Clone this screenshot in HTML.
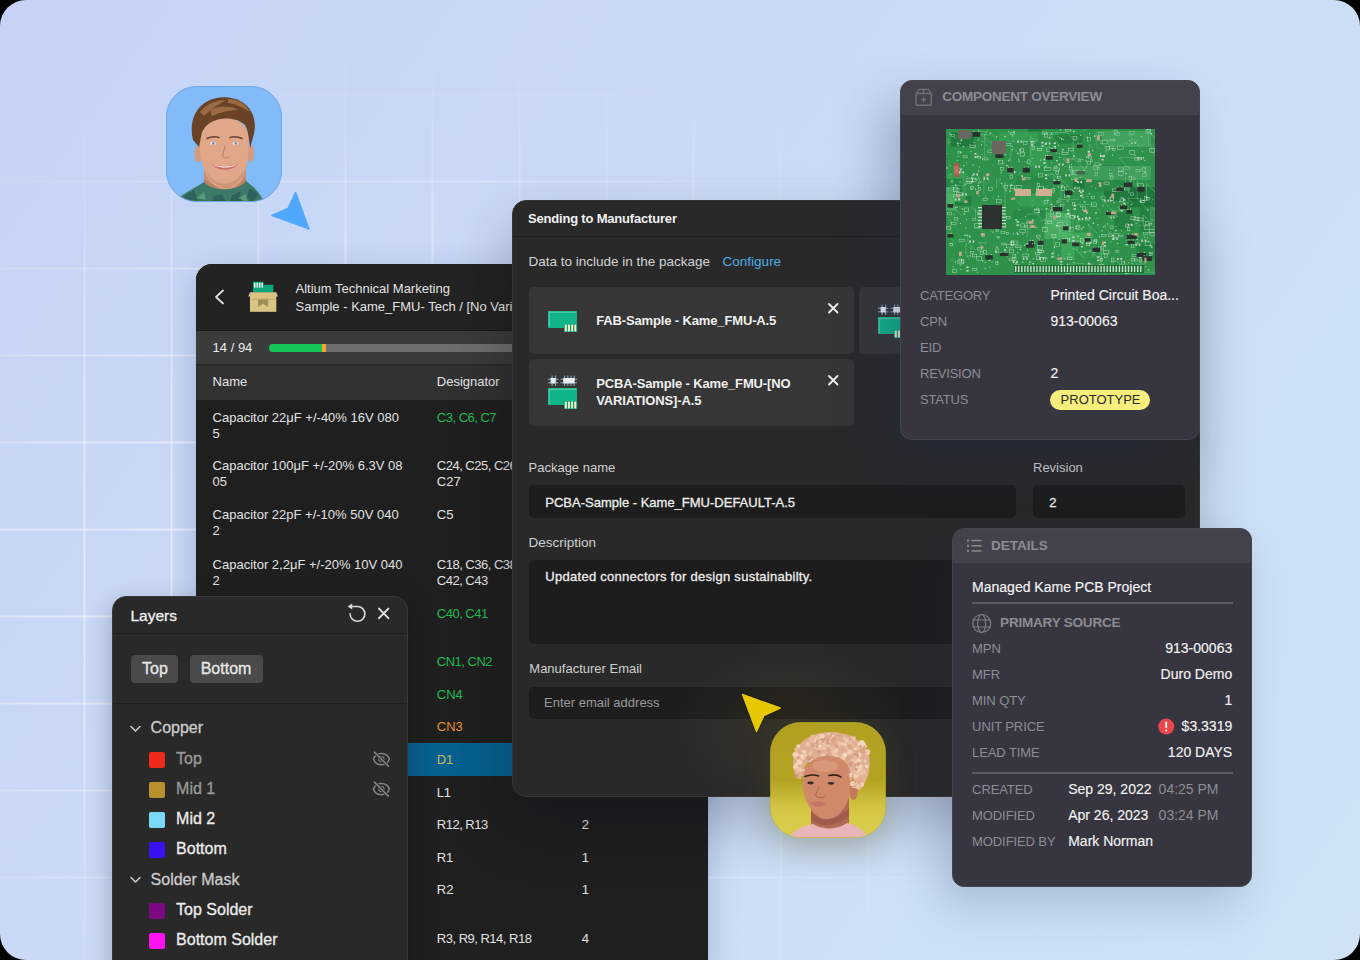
<!DOCTYPE html>
<html><head><meta charset="utf-8"><style>
html,body{margin:0;padding:0;width:1360px;height:960px;overflow:hidden;background:#000;}
body{position:relative;font-family:"Liberation Sans",sans-serif;}
.t{position:absolute;white-space:nowrap;line-height:1;}
.r{position:absolute;}
svg{position:absolute;overflow:visible;}
</style></head><body>
<div class="r" style="left:0;top:0;width:1360px;height:960px;border-radius:26px;overflow:hidden;background:linear-gradient(125deg,#c6d3f6 0%,#c7d4f6 5%,#cad9f6 34%,#cde0f6 74%,#cde1f5 85%,#cfe3f5 100%);"><div class="r" style="left:0;top:0;width:1360px;height:960px;background-image:linear-gradient(90deg,rgba(255,255,255,.5) 0 2px,transparent 2px),linear-gradient(180deg,rgba(255,255,255,.5) 0 2px,transparent 2px);background-size:87px 87px;background-position:83.5px 6.5px;-webkit-mask-image:radial-gradient(ellipse 700px 520px at 420px 560px,#000 40%,transparent 100%);"></div></div>
<svg style="left:0;top:0" width="1360" height="960" viewBox="0 0 1360 960">
<defs><clipPath id="av1"><rect x="166.5" y="86.5" width="115" height="115" rx="30"/></clipPath>
<clipPath id="av2"><rect x="770.5" y="722.5" width="115" height="115" rx="30"/></clipPath>
<linearGradient id="yg" x1="0" y1="0" x2="0" y2="1"><stop offset="0" stop-color="#b2a120"/><stop offset=".5" stop-color="#b4a322"/><stop offset=".76" stop-color="#d6c846"/><stop offset="1" stop-color="#dbcc4c"/></linearGradient>
</defs>
<g clip-path="url(#av1)">
<rect x="166" y="86" width="116" height="116" fill="#82bbfa"/>
<path d="M204 168 L246 168 L246 196 L204 196 Z" fill="#c98e72"/>
<path d="M204 178 C214 190 236 190 246 178 L246 186 C236 194 214 194 204 186 Z" fill="#b57a60" opacity=".7"/>
<path d="M170 204 L181 196 C190 190 198 186 204 182 C212 192 238 192 246 181 C252 186 258 190 262 198 L268 204 Z" fill="#3d7868"/>
<path d="M184 196 L194 190 L198 200 L188 202 Z M250 188 L258 194 L254 202 L246 198 Z M214 196 L222 194 L226 202 L212 202 Z M232 195 L240 192 L242 202 L230 202 Z" fill="#2c5c5a" opacity=".8"/>
<path d="M196 198 L204 192 L206 200 Z M238 198 L246 194 L248 202 Z" fill="#62a888" opacity=".7"/>
<ellipse cx="198" cy="154" rx="3.6" ry="8.5" fill="#d89a7c"/>
<ellipse cx="250.5" cy="153.5" rx="3.6" ry="8.5" fill="#d89a7c"/>
<path d="M199.5 138 C199 156 203 174 212 183 C217 188 222 189 226 189 C231 189 236 187 240 182 C247 173 249 156 248.5 138 C247 124 238 118 224 118 C210 118 201 124 199.5 138 Z" fill="#e0a888"/>
<path d="M203 164 C206 176 214 186 226 189 C236 187 244 178 247 164 C244 172 238 180 232 182 C228 184 222 184 218 182 C210 178 206 172 203 164 Z" fill="#b88a6c" opacity=".55"/>
<path d="M193 140 C189 124 194 108 208 101 C218 96 232 96 242 102 C252 108 257 120 254 134 L250 148 C249 138 248 130 245 125 C240 120 232 118 224 118.5 C214 119 206 124 202 132 L199 147 Z" fill="#6a4226"/>
<path d="M200 112 C206 104 216 100 226 100 C220 104 212 108 204 116 Z M228 99 C238 99 246 104 250 112 C244 108 236 104 228 103 Z M210 110 C218 106 230 105 238 110 C230 110 220 112 212 116 Z" fill="#9a6a44"/>
<path d="M207 138.5 C211 136.5 216 136.5 219 137.5 M230 137.5 C233 136.5 238 136.5 242 138.5" fill="none" stroke="#6a4630" stroke-width="1.6" stroke-linecap="round"/>
<ellipse cx="213" cy="143.5" rx="3" ry="1.4" fill="#f4e8e0"/><circle cx="213.3" cy="143.5" r="1.2" fill="#5a7ea8"/>
<ellipse cx="235.5" cy="143.5" rx="3" ry="1.4" fill="#f4e8e0"/><circle cx="235.8" cy="143.5" r="1.2" fill="#5a7ea8"/>
<path d="M225 146 L222.5 156 C224 158.5 227 158.5 229 157" fill="none" stroke="#b47a60" stroke-width="1"/>
<path d="M212.5 164 C219 166.5 231 166.5 237.5 164 C234 171.5 216 171.5 212.5 164 Z" fill="#d06a6a"/>
<path d="M213.5 164.5 C219 167 231 167 236.5 164.5 C233 168.5 217 168.5 213.5 164.5 Z" fill="#fff"/>
</g>
<rect x="166.5" y="86.5" width="115" height="115" rx="30" fill="none" stroke="#6eaaf2" stroke-width="1"/>
<path d="M295.6 192.5 L308.8 228.8 L272 215.5 L288 208.5 Z" fill="#50a8fd" stroke="#50a8fd" stroke-width="1.6" stroke-linejoin="round"/>
</svg>
<div class="r" style="left:196px;top:264px;width:512px;height:720px;border-radius:16px;background:#1f1f1f;overflow:hidden;box-shadow:0 10px 30px rgba(40,60,110,.25);"><div class="r" style="left:0;top:0;width:512px;height:66px;background:#232323"></div><div class="r" style="left:0;top:66px;width:512px;height:1.5px;background:#1a1a1a"></div><div class="r" style="left:0;top:67px;width:512px;height:33px;background:#3b3b3b"></div><div class="r" style="left:0;top:100px;width:512px;height:2px;background:#2a2a2a"></div><div class="r" style="left:0;top:102px;width:512px;height:34px;background:#313131"></div><div class="r" style="left:0;top:479px;width:512px;height:33px;background:#07608f"></div></div>
<svg style="left:0;top:0" width="1" height="1"><path d="M223 290.5 L216 297 L223 303.5" fill="none" stroke="#e0e0e0" stroke-width="1.8" stroke-linecap="round" stroke-linejoin="round"/></svg>
<svg style="left:0;top:0" width="1" height="1">
<path d="M253 292.5 L253 281.8 L263.5 281.8 L263.5 284.8 L273.3 284.8 L273.3 292.5 Z" fill="#0aa77a"/>
<rect x="254" y="282.8" width="1.5" height="4.8" fill="#f0f4f0"/><rect x="256.5" y="282.8" width="1.5" height="4.8" fill="#f0f4f0"/><rect x="259" y="282.8" width="1.5" height="4.8" fill="#f0f4f0"/><rect x="261.5" y="282.8" width="1.5" height="4.8" fill="#f0f4f0"/>
<rect x="250" y="295" width="26.3" height="16.8" fill="#dac486"/>
<path d="M248.2 296.5 L250 292.2 L276.3 292.2 L278 296.5 L276.3 296.5 L275 299.4 L251.3 299.4 L250 296.5 Z" fill="#d9c283"/>
<path d="M251.3 299.4 L275 299.4" stroke="#b8a268" stroke-width=".8"/>
<path d="M258 299.4 L268.1 299.4 L268.1 306.9 L263 303.8 L258 306.9 Z" fill="#9f8f55"/>
</svg>
<div class="t" style="left:295.5px;top:281.60px;font-size:13px;color:#e2e2e2;font-weight:400;">Altium Technical Marketing</div>
<div class="t" style="left:295.5px;top:299.80px;font-size:13px;color:#e2e2e2;font-weight:400;">Sample - Kame_FMU- Tech / [No Variations]</div>
<div class="t" style="left:212.6px;top:341.00px;font-size:13px;color:#ececec;font-weight:400;">14 / 94</div>
<div class="r" style="left:269px;top:344px;width:420px;height:8px;background:#6e6e6e;border-radius:4px;"></div>
<div class="r" style="left:269px;top:344px;width:56px;height:8px;background:#13c457;border-radius:4px 0 0 4px;"></div>
<div class="r" style="left:322px;top:344px;width:4px;height:8px;background:#f3a22a;"></div>
<div class="t" style="left:212.6px;top:375.00px;font-size:13px;color:#e6e6e6;font-weight:400;">Name</div>
<div class="t" style="left:436.8px;top:375.00px;font-size:13px;color:#e6e6e6;font-weight:400;">Designator</div>
<div class="t" style="left:212.6px;top:411.00px;font-size:13px;color:#e2e2e2;font-weight:400;">Capacitor 22μF +/-40% 16V 080</div>
<div class="t" style="left:212.6px;top:427.00px;font-size:13px;color:#e2e2e2;font-weight:400;">5</div>
<div class="t" style="left:436.8px;top:411.00px;font-size:13px;color:#1fbd4f;font-weight:400;letter-spacing:-0.5px;">C3, C6, C7</div>
<div class="t" style="left:212.6px;top:459.00px;font-size:13px;color:#e2e2e2;font-weight:400;">Capacitor 100μF +/-20% 6.3V 08</div>
<div class="t" style="left:212.6px;top:475.00px;font-size:13px;color:#e2e2e2;font-weight:400;">05</div>
<div class="t" style="left:436.8px;top:459.00px;font-size:13px;color:#e2e2e2;font-weight:400;letter-spacing:-0.5px;">C24, C25, C26,</div>
<div class="t" style="left:436.8px;top:475.00px;font-size:13px;color:#e2e2e2;font-weight:400;">C27</div>
<div class="t" style="left:212.6px;top:508.30px;font-size:13px;color:#e2e2e2;font-weight:400;">Capacitor 22pF +/-10% 50V 040</div>
<div class="t" style="left:212.6px;top:524.30px;font-size:13px;color:#e2e2e2;font-weight:400;">2</div>
<div class="t" style="left:436.8px;top:508.30px;font-size:13px;color:#e2e2e2;font-weight:400;">C5</div>
<div class="t" style="left:212.6px;top:557.70px;font-size:13px;color:#e2e2e2;font-weight:400;">Capacitor 2,2μF +/-20% 10V 040</div>
<div class="t" style="left:212.6px;top:573.70px;font-size:13px;color:#e2e2e2;font-weight:400;">2</div>
<div class="t" style="left:436.8px;top:557.70px;font-size:13px;color:#e2e2e2;font-weight:400;letter-spacing:-0.5px;">C18, C36, C38,</div>
<div class="t" style="left:436.8px;top:573.70px;font-size:13px;color:#e2e2e2;font-weight:400;letter-spacing:-0.5px;">C42, C43</div>
<div class="t" style="left:436.8px;top:606.50px;font-size:13px;color:#1fbd4f;font-weight:400;letter-spacing:-0.5px;">C40, C41</div>
<div class="t" style="left:436.8px;top:655.00px;font-size:13px;color:#1fbd4f;font-weight:400;letter-spacing:-0.5px;">CN1, CN2</div>
<div class="t" style="left:436.8px;top:687.70px;font-size:13px;color:#1fbd4f;font-weight:400;">CN4</div>
<div class="t" style="left:436.8px;top:720.30px;font-size:13px;color:#e8912e;font-weight:400;">CN3</div>
<div class="t" style="left:436.8px;top:753.00px;font-size:13px;color:#c9b85c;font-weight:400;letter-spacing:-0.3px;">D1</div>
<div class="t" style="left:436.8px;top:785.70px;font-size:13px;color:#e2e2e2;font-weight:400;letter-spacing:-0.3px;">L1</div>
<div class="t" style="left:436.8px;top:818.30px;font-size:13px;color:#e2e2e2;font-weight:400;letter-spacing:-0.5px;">R12, R13</div>
<div class="t" style="left:581.7px;top:818.30px;font-size:13px;color:#e2e2e2;font-weight:400;">2</div>
<div class="t" style="left:436.8px;top:850.70px;font-size:13px;color:#e2e2e2;font-weight:400;letter-spacing:-0.3px;">R1</div>
<div class="t" style="left:581.7px;top:850.70px;font-size:13px;color:#e2e2e2;font-weight:400;">1</div>
<div class="t" style="left:436.8px;top:883.30px;font-size:13px;color:#e2e2e2;font-weight:400;">R2</div>
<div class="t" style="left:581.7px;top:883.30px;font-size:13px;color:#e2e2e2;font-weight:400;">1</div>
<div class="t" style="left:436.8px;top:932.30px;font-size:13px;color:#e2e2e2;font-weight:400;letter-spacing:-0.5px;">R3, R9, R14, R18</div>
<div class="t" style="left:581.7px;top:932.30px;font-size:13px;color:#e2e2e2;font-weight:400;">4</div>
<div class="r" style="left:112px;top:596px;width:294px;height:400px;border-radius:14px;background:#292929;border:1px solid #3a3a3a;box-shadow:0 8px 24px rgba(0,0,0,.25);"><div class="r" style="left:0;top:36px;width:294px;height:1px;background:#1e1e1e"></div><div class="r" style="left:0;top:106px;width:294px;height:1px;background:#1e1e1e"></div></div>
<div class="t" style="left:130.5px;top:607.68px;font-size:15.5px;color:#f0f0f0;font-weight:400;-webkit-text-stroke:.3px currentColor;">Layers</div>
<svg style="left:0;top:0" width="1" height="1"><path d="M351.5 606.5 L357.4 606.5 A7.4 7.4 0 1 1 350.1 613.9" fill="none" stroke="#d8d8d8" stroke-width="1.6" stroke-linecap="round"/><path d="M347.6 606.5 L352.2 603.4 L352.2 609.6 Z" fill="#d8d8d8"/><path d="M379 608.6 L388.4 618.2 M388.4 608.6 L379 618.2" stroke="#e4e4e4" stroke-width="1.9" stroke-linecap="round"/></svg>
<div class="r" style="left:131px;top:655px;width:47px;height:28px;background:#4a4a4a;border-radius:4px;"></div>
<div class="r" style="left:190px;top:655px;width:73px;height:28px;background:#4a4a4a;border-radius:4px;"></div>
<div class="t" style="left:142px;top:661.26px;font-size:16px;color:#e8e8e8;font-weight:400;-webkit-text-stroke:.3px currentColor;">Top</div>
<div class="t" style="left:200.7px;top:661.26px;font-size:16px;color:#e8e8e8;font-weight:400;-webkit-text-stroke:.3px currentColor;">Bottom</div>
<svg style="left:0;top:0" width="1" height="1"><path d="M131 726.5 L135.5 731.0 L140 726.5" fill="none" stroke="#cfcfcf" stroke-width="1.5" stroke-linecap="round" stroke-linejoin="round"/></svg>
<div class="t" style="left:150.6px;top:720.46px;font-size:16px;color:#cccccc;font-weight:400;-webkit-text-stroke:.3px currentColor;">Copper</div>
<svg style="left:0;top:0" width="1" height="1"><path d="M131 877.5 L135.5 882.0 L140 877.5" fill="none" stroke="#cfcfcf" stroke-width="1.5" stroke-linecap="round" stroke-linejoin="round"/></svg>
<div class="t" style="left:150.6px;top:871.56px;font-size:16px;color:#cccccc;font-weight:400;-webkit-text-stroke:.3px currentColor;">Solder Mask</div>
<div class="r" style="left:149px;top:751.9px;width:16px;height:16px;background:#f02a18;border-radius:2px;"></div>
<div class="t" style="left:176.1px;top:750.86px;font-size:16px;color:#9a9a9a;font-weight:400;-webkit-text-stroke:.3px currentColor;">Top</div>
<svg style="left:0;top:0" width="1" height="1"><path d="M373.4 759.1 C376 751.5 386.8 751.5 389.4 759.1 C386.8 766.7 376 766.7 373.4 759.1 Z" fill="none" stroke="#858585" stroke-width="1.5"/><circle cx="381.4" cy="759.1" r="2.6" fill="none" stroke="#858585" stroke-width="1.1"/><path d="M374.4 752.1 L388.3 766.1" stroke="#292929" stroke-width="3.2"/><path d="M374.4 752.1 L388.3 766.1" stroke="#858585" stroke-width="1.5" stroke-linecap="round"/></svg>
<div class="r" style="left:149px;top:781.9px;width:16px;height:16px;background:#b8902c;border-radius:2px;"></div>
<div class="t" style="left:176.1px;top:780.86px;font-size:16px;color:#9a9a9a;font-weight:400;-webkit-text-stroke:.3px currentColor;">Mid 1</div>
<svg style="left:0;top:0" width="1" height="1"><path d="M373.4 789.1 C376 781.5 386.8 781.5 389.4 789.1 C386.8 796.7 376 796.7 373.4 789.1 Z" fill="none" stroke="#858585" stroke-width="1.5"/><circle cx="381.4" cy="789.1" r="2.6" fill="none" stroke="#858585" stroke-width="1.1"/><path d="M374.4 782.1 L388.3 796.1" stroke="#292929" stroke-width="3.2"/><path d="M374.4 782.1 L388.3 796.1" stroke="#858585" stroke-width="1.5" stroke-linecap="round"/></svg>
<div class="r" style="left:149px;top:812.2px;width:16px;height:16px;background:#79d9f6;border-radius:2px;"></div>
<div class="t" style="left:176.1px;top:811.16px;font-size:16px;color:#ececec;font-weight:400;-webkit-text-stroke:.3px currentColor;">Mid 2</div>
<div class="r" style="left:149px;top:842.3px;width:16px;height:16px;background:#3b10f2;border-radius:2px;"></div>
<div class="t" style="left:176.1px;top:841.26px;font-size:16px;color:#ececec;font-weight:400;-webkit-text-stroke:.3px currentColor;">Bottom</div>
<div class="r" style="left:149px;top:902.7px;width:16px;height:16px;background:#7b0a82;border-radius:2px;"></div>
<div class="t" style="left:176.1px;top:901.66px;font-size:16px;color:#ececec;font-weight:400;-webkit-text-stroke:.3px currentColor;">Top Solder</div>
<div class="r" style="left:149px;top:933.0px;width:16px;height:16px;background:#ff12f2;border-radius:2px;"></div>
<div class="t" style="left:176.1px;top:931.96px;font-size:16px;color:#ececec;font-weight:400;-webkit-text-stroke:.3px currentColor;">Bottom Solder</div>
<div class="r" style="left:512px;top:200px;width:686px;height:595px;border:1px solid #363636;border-radius:14px;background:#292929;overflow:hidden;box-shadow:-4px 26px 60px rgba(0,5,15,.24);"><div class="r" style="left:0;top:35px;width:686px;height:1px;background:#1e1e1e"></div></div>
<div class="t" style="left:528px;top:212.00px;font-size:13px;color:#f2f2f2;font-weight:700;letter-spacing:-0.19px;">Sending to Manufacturer</div>
<div class="t" style="left:528.5px;top:255.07px;font-size:13.5px;color:#d4d4d4;font-weight:400;">Data to include in the package</div>
<div class="t" style="left:722.6px;top:255.07px;font-size:13.5px;color:#4eaee6;font-weight:400;">Configure</div>
<div class="r" style="left:529px;top:287px;width:325px;height:67px;background:#363636;border-radius:5px;"></div>
<div class="r" style="left:529px;top:359px;width:325px;height:67px;background:#363636;border-radius:5px;"></div>
<div class="r" style="left:859px;top:287px;width:60px;height:67px;background:#363636;border-radius:5px;"></div>
<svg style="left:0;top:0" width="1" height="1"><rect x="548" y="311" width="29" height="17" fill="#10b489"/><path d="M549.2 327 L549.2 312.2 L576 312.2" fill="none" stroke="#7ad6b4" stroke-width=".8"/><rect x="564" y="324" width="13.2" height="8" fill="#0ea07a"/><rect x="564.80" y="324.6" width="2" height="6.8" fill="#eef0c4"/><rect x="567.95" y="324.6" width="2" height="6.8" fill="#eef0c4"/><rect x="571.10" y="324.6" width="2" height="6.8" fill="#eef0c4"/><rect x="574.25" y="324.6" width="2" height="6.8" fill="#eef0c4"/></svg>
<svg style="left:0;top:0" width="1" height="1"><rect x="551.5" y="375.5" width="1.2" height="10.5" fill="#7f9cb0"/><rect x="555" y="375.5" width="1.2" height="10.5" fill="#7f9cb0"/><rect x="548" y="378.7" width="10.5" height="1.2" fill="#7f9cb0"/><rect x="560.5" y="378.7" width="16.7" height="1.2" fill="#7f9cb0"/><rect x="548" y="382.2" width="10.5" height="1.2" fill="#7f9cb0"/><rect x="560.5" y="382.2" width="16.7" height="1.2" fill="#7f9cb0"/><rect x="564" y="375.5" width="1.2" height="10.5" fill="#7f9cb0"/><rect x="567.2" y="375.5" width="1.2" height="10.5" fill="#7f9cb0"/><rect x="570.4" y="375.5" width="1.2" height="10.5" fill="#7f9cb0"/><rect x="573.6" y="375.5" width="1.2" height="10.5" fill="#7f9cb0"/><rect x="550.6" y="378" width="5" height="5.4" fill="#eef2f4"/><rect x="563.2" y="378" width="11.4" height="5.4" fill="#e8ecef"/><rect x="548" y="388" width="29" height="17" fill="#10b489"/><path d="M549.2 404 L549.2 389.2 L576 389.2" fill="none" stroke="#7ad6b4" stroke-width=".8"/><rect x="564" y="401" width="13.2" height="8" fill="#0ea07a"/><rect x="564.80" y="401.6" width="2" height="6.8" fill="#eef0c4"/><rect x="567.95" y="401.6" width="2" height="6.8" fill="#eef0c4"/><rect x="571.10" y="401.6" width="2" height="6.8" fill="#eef0c4"/><rect x="574.25" y="401.6" width="2" height="6.8" fill="#eef0c4"/></svg>
<svg style="left:0;top:0" width="1" height="1"><rect x="881.5" y="304.5" width="1.2" height="10.5" fill="#7f9cb0"/><rect x="885" y="304.5" width="1.2" height="10.5" fill="#7f9cb0"/><rect x="878" y="307.7" width="10.5" height="1.2" fill="#7f9cb0"/><rect x="890.5" y="307.7" width="16.7" height="1.2" fill="#7f9cb0"/><rect x="878" y="311.2" width="10.5" height="1.2" fill="#7f9cb0"/><rect x="890.5" y="311.2" width="16.7" height="1.2" fill="#7f9cb0"/><rect x="894" y="304.5" width="1.2" height="10.5" fill="#7f9cb0"/><rect x="897.2" y="304.5" width="1.2" height="10.5" fill="#7f9cb0"/><rect x="900.4" y="304.5" width="1.2" height="10.5" fill="#7f9cb0"/><rect x="903.6" y="304.5" width="1.2" height="10.5" fill="#7f9cb0"/><rect x="880.6" y="307" width="5" height="5.4" fill="#eef2f4"/><rect x="893.2" y="307" width="11.4" height="5.4" fill="#e8ecef"/><rect x="878" y="317" width="29" height="17" fill="#10b489"/><path d="M879.2 333 L879.2 318.2 L906 318.2" fill="none" stroke="#7ad6b4" stroke-width=".8"/><rect x="894" y="330" width="13.2" height="8" fill="#0ea07a"/><rect x="894.80" y="330.6" width="2" height="6.8" fill="#eef0c4"/><rect x="897.95" y="330.6" width="2" height="6.8" fill="#eef0c4"/><rect x="901.10" y="330.6" width="2" height="6.8" fill="#eef0c4"/><rect x="904.25" y="330.6" width="2" height="6.8" fill="#eef0c4"/></svg>
<div class="t" style="left:596.2px;top:314.00px;font-size:13px;color:#f0f0f0;font-weight:700;letter-spacing:-0.14px;">FAB-Sample - Kame_FMU-A.5</div>
<div class="t" style="left:596.2px;top:377.20px;font-size:13px;color:#f0f0f0;font-weight:700;letter-spacing:-0.14px;">PCBA-Sample - Kame_FMU-[NO</div>
<div class="t" style="left:596.2px;top:393.70px;font-size:13px;color:#f0f0f0;font-weight:700;letter-spacing:-0.14px;">VARIATIONS]-A.5</div>
<svg style="left:0;top:0" width="1" height="1"><path d="M829 304 L837.5 312.5 M837.5 304 L829 312.5" stroke="#f0f0f0" stroke-width="1.8" stroke-linecap="round"/></svg>
<svg style="left:0;top:0" width="1" height="1"><path d="M829 376 L837.5 384.5 M837.5 376 L829 384.5" stroke="#f0f0f0" stroke-width="1.8" stroke-linecap="round"/></svg>
<div class="t" style="left:528.5px;top:460.80px;font-size:13px;color:#cfcfcf;font-weight:400;">Package name</div>
<div class="t" style="left:1033px;top:461.00px;font-size:13px;color:#cfcfcf;font-weight:400;">Revision</div>
<div class="r" style="left:529px;top:485px;width:487px;height:33px;background:#1d1d1d;border-radius:5px;"></div>
<div class="r" style="left:1033px;top:485px;width:152px;height:33px;background:#1d1d1d;border-radius:5px;"></div>
<div class="t" style="left:545.3px;top:495.50px;font-size:13px;color:#ededed;font-weight:400;-webkit-text-stroke:.3px currentColor;">PCBA-Sample - Kame_FMU-DEFAULT-A.5</div>
<div class="t" style="left:1049.3px;top:495.50px;font-size:13px;color:#ededed;font-weight:400;-webkit-text-stroke:.3px currentColor;">2</div>
<div class="t" style="left:528.5px;top:535.97px;font-size:13.5px;color:#cfcfcf;font-weight:400;">Description</div>
<div class="r" style="left:529px;top:560px;width:656px;height:84px;background:#1d1d1d;border-radius:5px;"></div>
<div class="t" style="left:545.3px;top:570.20px;font-size:13px;color:#ededed;font-weight:400;-webkit-text-stroke:.3px currentColor;letter-spacing:0.28px;">Updated connectors for design sustainabilty.</div>
<div class="t" style="left:529.3px;top:662.30px;font-size:13px;color:#cfcfcf;font-weight:400;">Manufacturer Email</div>
<div class="r" style="left:529px;top:687px;width:656px;height:32px;background:#1d1d1d;border-radius:5px;"></div>
<div class="t" style="left:544px;top:695.70px;font-size:13px;color:#9a9a9a;font-weight:400;">Enter email address</div>
<div class="r" style="left:900px;top:80px;width:298px;height:358px;border:1px solid #46454f;border-radius:12px;background:#363540;overflow:hidden;box-shadow:-18px 24px 50px rgba(30,45,90,.28);"><div class="r" style="left:0;top:0;width:298px;height:34px;background:#43424c"></div></div>
<svg style="left:0;top:0" width="1" height="1"><rect x="916" y="93.5" width="15.3" height="11.8" rx="1.3" fill="none" stroke="#707078" stroke-width="1.4"/><path d="M916 93.5 L919.2 89.3 L928.2 89.3 L931.3 93.5 M923.6 89.3 L923.6 93.5 M923.6 96.8 L923.6 102.2 M920.9 99.5 L926.3 99.5" fill="none" stroke="#707078" stroke-width="1.3"/></svg>
<div class="t" style="left:942.2px;top:90.37px;font-size:13.5px;color:#8c8c93;font-weight:700;letter-spacing:-0.24px;">COMPONENT OVERVIEW</div>
<svg style="left:946px;top:129px;overflow:hidden" width="209" height="146" viewBox="0 0 209 146"><rect x="0" y="0" width="209" height="146" fill="#2e924a"/><rect x="183.2" y="58.0" width="26.9" height="20.3" fill="#1a6e36" opacity=".7"/><rect x="158.0" y="59.5" width="40.2" height="12.2" fill="#1a6e36" opacity=".7"/><rect x="53.4" y="3.2" width="38.2" height="10.1" fill="#3aa456" opacity=".7"/><rect x="72.8" y="56.1" width="32.9" height="21.1" fill="#3aa456" opacity=".7"/><rect x="-6.9" y="67.1" width="32.3" height="11.5" fill="#1f7c3e" opacity=".7"/><rect x="115.3" y="103.6" width="13.2" height="27.4" fill="#44b060" opacity=".7"/><rect x="98.5" y="83.5" width="26.5" height="26.5" fill="#52b86c" opacity=".7"/><rect x="126.9" y="49.4" width="12.2" height="9.9" fill="#1a6e36" opacity=".7"/><rect x="137.9" y="36.0" width="44.9" height="26.5" fill="#268844" opacity=".7"/><rect x="107.7" y="5.8" width="28.9" height="8.7" fill="#1f7c3e" opacity=".7"/><rect x="190.2" y="113.7" width="39.9" height="16.5" fill="#1f7c3e" opacity=".7"/><rect x="0.9" y="44.8" width="19.0" height="28.4" fill="#3aa456" opacity=".7"/><rect x="121.6" y="103.7" width="25.1" height="9.6" fill="#44b060" opacity=".7"/><rect x="-6.8" y="49.9" width="23.1" height="14.8" fill="#1f7c3e" opacity=".7"/><rect x="-7.7" y="57.9" width="16.4" height="23.6" fill="#52b86c" opacity=".7"/><rect x="83.5" y="17.8" width="17.9" height="20.3" fill="#3aa456" opacity=".7"/><rect x="70.2" y="47.6" width="37.4" height="17.2" fill="#268844" opacity=".7"/><rect x="193.7" y="76.5" width="12.0" height="27.0" fill="#1f7c3e" opacity=".7"/><rect x="168.6" y="83.7" width="19.0" height="16.7" fill="#1f7c3e" opacity=".7"/><rect x="82.3" y="-8.6" width="13.4" height="11.2" fill="#1a6e36" opacity=".7"/><rect x="5.3" y="3.2" width="22.9" height="14.5" fill="#1a6e36" opacity=".7"/><rect x="67.1" y="80.8" width="33.0" height="8.3" fill="#268844" opacity=".7"/><path d="M200.5 70.6 v-16.1 l10.8 10.8" fill="none" stroke="#7fd092" stroke-width=".7" opacity=".6"/><path d="M65.0 33.3 v-16.8 l9.5 9.5" fill="none" stroke="#7fd092" stroke-width=".7" opacity=".6"/><path d="M196.5 28.7 h-24.0 l10.9 10.9" fill="none" stroke="#7fd092" stroke-width=".7" opacity=".6"/><path d="M21.7 5.6 h24.2 l5.1 5.1" fill="none" stroke="#7fd092" stroke-width=".7" opacity=".6"/><path d="M172.2 87.1 h-10.2 l4.6 4.6" fill="none" stroke="#7fd092" stroke-width=".7" opacity=".6"/><path d="M100.2 95.4 v-16.9 l3.7 3.7" fill="none" stroke="#7fd092" stroke-width=".7" opacity=".6"/><path d="M42.6 2.4 h-9.7 l7.0 7.0" fill="none" stroke="#7fd092" stroke-width=".7" opacity=".6"/><path d="M58.9 77.5 v-24.4 l3.8 3.8" fill="none" stroke="#7fd092" stroke-width=".7" opacity=".6"/><path d="M204.9 95.9 v-18.5 l8.3 8.3" fill="none" stroke="#7fd092" stroke-width=".7" opacity=".6"/><path d="M193.0 69.3 h-11.5 l5.8 5.8" fill="none" stroke="#7fd092" stroke-width=".7" opacity=".6"/><path d="M133.0 70.4 h-19.3 l5.9 5.9" fill="none" stroke="#7fd092" stroke-width=".7" opacity=".6"/><path d="M114.1 107.6 v-22.9 l9.6 9.6" fill="none" stroke="#7fd092" stroke-width=".7" opacity=".6"/><path d="M191.2 51.4 v18.4 l11.1 11.1" fill="none" stroke="#7fd092" stroke-width=".7" opacity=".6"/><path d="M6.3 73.0 v4.3 l9.0 9.0" fill="none" stroke="#7fd092" stroke-width=".7" opacity=".6"/><path d="M127.3 11.7 v17.4 l11.9 11.9" fill="none" stroke="#7fd092" stroke-width=".7" opacity=".6"/><path d="M81.2 107.3 v-16.2 l7.0 7.0" fill="none" stroke="#7fd092" stroke-width=".7" opacity=".6"/><path d="M107.5 45.3 h-5.8 l3.2 3.2" fill="none" stroke="#7fd092" stroke-width=".7" opacity=".6"/><path d="M128.4 134.4 h9.4 l3.1 3.1" fill="none" stroke="#7fd092" stroke-width=".7" opacity=".6"/><path d="M127.9 75.7 h19.8 l6.1 6.1" fill="none" stroke="#7fd092" stroke-width=".7" opacity=".6"/><path d="M50.5 59.1 v-9.3 l8.7 8.7" fill="none" stroke="#7fd092" stroke-width=".7" opacity=".6"/><path d="M80.3 85.1 h10.6 l4.2 4.2" fill="none" stroke="#7fd092" stroke-width=".7" opacity=".6"/><path d="M187.2 5.9 h-5.3 l11.8 11.8" fill="none" stroke="#7fd092" stroke-width=".7" opacity=".6"/><path d="M98.5 135.2 v21.4 l6.4 6.4" fill="none" stroke="#7fd092" stroke-width=".7" opacity=".6"/><path d="M149.7 122.9 h-17.1 l5.9 5.9" fill="none" stroke="#7fd092" stroke-width=".7" opacity=".6"/><path d="M127.0 99.0 v-9.9 l6.2 6.2" fill="none" stroke="#7fd092" stroke-width=".7" opacity=".6"/><path d="M84.7 27.7 v-20.2 l5.4 5.4" fill="none" stroke="#7fd092" stroke-width=".7" opacity=".6"/><path d="M205.7 16.8 v6.3 l7.8 7.8" fill="none" stroke="#7fd092" stroke-width=".7" opacity=".6"/><path d="M143.1 29.1 v-14.0 l4.6 4.6" fill="none" stroke="#7fd092" stroke-width=".7" opacity=".6"/><path d="M111.8 5.3 h-8.8 l10.0 10.0" fill="none" stroke="#7fd092" stroke-width=".7" opacity=".6"/><path d="M165.5 132.3 h5.8 l11.4 11.4" fill="none" stroke="#7fd092" stroke-width=".7" opacity=".6"/><path d="M94.8 91.3 h23.1 l6.4 6.4" fill="none" stroke="#7fd092" stroke-width=".7" opacity=".6"/><path d="M136.1 29.9 h-19.2 l10.4 10.4" fill="none" stroke="#7fd092" stroke-width=".7" opacity=".6"/><path d="M188.1 143.2 h24.5 l7.8 7.8" fill="none" stroke="#7fd092" stroke-width=".7" opacity=".6"/><path d="M150.1 2.3 v14.6 l3.3 3.3" fill="none" stroke="#7fd092" stroke-width=".7" opacity=".6"/><path d="M160.6 71.2 h-4.6 l10.3 10.3" fill="none" stroke="#7fd092" stroke-width=".7" opacity=".6"/><path d="M7.3 77.8 h18.4 l11.2 11.2" fill="none" stroke="#7fd092" stroke-width=".7" opacity=".6"/><path d="M108.0 105.6 v21.6 l9.2 9.2" fill="none" stroke="#7fd092" stroke-width=".7" opacity=".6"/><path d="M144.0 110.6 v-13.2 l8.0 8.0" fill="none" stroke="#7fd092" stroke-width=".7" opacity=".6"/><path d="M176.3 81.8 h-10.5 l6.4 6.4" fill="none" stroke="#7fd092" stroke-width=".7" opacity=".6"/><path d="M29.5 79.5 v9.7 l7.5 7.5" fill="none" stroke="#7fd092" stroke-width=".7" opacity=".6"/><path d="M105.2 88.4 v4.6 l11.7 11.7" fill="none" stroke="#7fd092" stroke-width=".7" opacity=".6"/><path d="M206.8 17.8 h6.0 l4.5 4.5" fill="none" stroke="#7fd092" stroke-width=".7" opacity=".6"/><path d="M200.0 134.8 h-9.7 l7.3 7.3" fill="none" stroke="#7fd092" stroke-width=".7" opacity=".6"/><path d="M188.3 136.6 h-23.3 l7.7 7.7" fill="none" stroke="#7fd092" stroke-width=".7" opacity=".6"/><path d="M129.1 135.1 h-6.7 l10.0 10.0" fill="none" stroke="#7fd092" stroke-width=".7" opacity=".6"/><path d="M32.5 1.7 v-10.0 l9.5 9.5" fill="none" stroke="#7fd092" stroke-width=".7" opacity=".6"/><path d="M21.9 106.7 v6.6 l7.6 7.6" fill="none" stroke="#7fd092" stroke-width=".7" opacity=".6"/><path d="M146.6 128.3 v-4.5 l8.7 8.7" fill="none" stroke="#7fd092" stroke-width=".7" opacity=".6"/><path d="M180.5 78.0 h-8.6 l4.9 4.9" fill="none" stroke="#7fd092" stroke-width=".7" opacity=".6"/><path d="M154.8 118.3 v23.0 l5.8 5.8" fill="none" stroke="#7fd092" stroke-width=".7" opacity=".6"/><path d="M40.7 113.6 h-8.1 l3.9 3.9" fill="none" stroke="#7fd092" stroke-width=".7" opacity=".6"/><path d="M18.4 56.6 h-13.1 l11.5 11.5" fill="none" stroke="#7fd092" stroke-width=".7" opacity=".6"/><path d="M131.3 116.6 v6.0 l8.1 8.1" fill="none" stroke="#7fd092" stroke-width=".7" opacity=".6"/><path d="M202.4 16.8 v-14.6 l9.8 9.8" fill="none" stroke="#7fd092" stroke-width=".7" opacity=".6"/><path d="M100.8 3.5 h20.0 l8.5 8.5" fill="none" stroke="#7fd092" stroke-width=".7" opacity=".6"/><path d="M38.6 29.8 v-21.6 l11.9 11.9" fill="none" stroke="#7fd092" stroke-width=".7" opacity=".6"/><path d="M28.1 99.4 h5.6 l3.9 3.9" fill="none" stroke="#7fd092" stroke-width=".7" opacity=".6"/><path d="M107.7 62.8 v-16.6 l3.1 3.1" fill="none" stroke="#7fd092" stroke-width=".7" opacity=".6"/><path d="M37.9 66.3 v-19.5 l6.6 6.6" fill="none" stroke="#7fd092" stroke-width=".7" opacity=".6"/><path d="M19.8 115.7 v10.8 l3.8 3.8" fill="none" stroke="#7fd092" stroke-width=".7" opacity=".6"/><path d="M39.9 85.4 v11.2 l9.9 9.9" fill="none" stroke="#7fd092" stroke-width=".7" opacity=".6"/><path d="M155.6 113.6 v21.1 l6.7 6.7" fill="none" stroke="#7fd092" stroke-width=".7" opacity=".6"/><path d="M145.2 112.0 h-20.1 l6.7 6.7" fill="none" stroke="#7fd092" stroke-width=".7" opacity=".6"/><path d="M71.4 68.5 h-4.2 l6.2 6.2" fill="none" stroke="#7fd092" stroke-width=".7" opacity=".6"/><path d="M197.4 97.2 v-11.1 l8.9 8.9" fill="none" stroke="#7fd092" stroke-width=".7" opacity=".6"/><path d="M81.4 146.0 v17.5 l9.3 9.3" fill="none" stroke="#7fd092" stroke-width=".7" opacity=".6"/><path d="M4.8 89.8 v19.5 l5.3 5.3" fill="none" stroke="#7fd092" stroke-width=".7" opacity=".6"/><path d="M159.1 94.6 v4.2 l5.3 5.3" fill="none" stroke="#7fd092" stroke-width=".7" opacity=".6"/><path d="M115.0 74.1 v-24.3 l8.1 8.1" fill="none" stroke="#7fd092" stroke-width=".7" opacity=".6"/><path d="M169.2 11.1 h-16.5 l9.8 9.8" fill="none" stroke="#7fd092" stroke-width=".7" opacity=".6"/><rect x="191.5" y="54.8" width="5.9" height="3.6" fill="none" stroke="#e0f2e2" stroke-width=".5" opacity=".75"/><rect x="110.6" y="84.7" width="3.7" height="2.7" fill="none" stroke="#e0f2e2" stroke-width=".5" opacity=".75"/><rect x="58.0" y="56.6" width="3.2" height="2.8" fill="none" stroke="#e0f2e2" stroke-width=".5" opacity=".75"/><rect x="98.6" y="38.3" width="5.7" height="3.2" fill="none" stroke="#e0f2e2" stroke-width=".5" opacity=".75"/><rect x="152.5" y="3.8" width="5.1" height="3.0" fill="none" stroke="#e0f2e2" stroke-width=".5" opacity=".75"/><rect x="129.1" y="58.1" width="4.7" height="1.6" fill="none" stroke="#e0f2e2" stroke-width=".5" opacity=".75"/><rect x="64.3" y="56.5" width="4.3" height="3.3" fill="none" stroke="#e0f2e2" stroke-width=".5" opacity=".75"/><rect x="65.1" y="113.3" width="2.9" height="3.3" fill="none" stroke="#e0f2e2" stroke-width=".5" opacity=".75"/><rect x="51.2" y="107.3" width="2.2" height="1.7" fill="none" stroke="#e0f2e2" stroke-width=".5" opacity=".75"/><rect x="165.3" y="129.1" width="2.6" height="3.9" fill="none" stroke="#e0f2e2" stroke-width=".5" opacity=".75"/><rect x="50.0" y="100.3" width="2.2" height="2.5" fill="none" stroke="#e0f2e2" stroke-width=".5" opacity=".75"/><rect x="24.1" y="122.3" width="3.4" height="1.9" fill="none" stroke="#e0f2e2" stroke-width=".5" opacity=".75"/><rect x="74.1" y="19.8" width="3.7" height="3.0" fill="none" stroke="#e0f2e2" stroke-width=".5" opacity=".75"/><rect x="130.5" y="96.8" width="3.5" height="3.4" fill="none" stroke="#e0f2e2" stroke-width=".5" opacity=".75"/><rect x="166.3" y="19.5" width="3.2" height="1.8" fill="none" stroke="#e0f2e2" stroke-width=".5" opacity=".75"/><rect x="98.1" y="71.4" width="3.2" height="2.8" fill="none" stroke="#e0f2e2" stroke-width=".5" opacity=".75"/><rect x="172.7" y="39.0" width="4.4" height="3.3" fill="none" stroke="#e0f2e2" stroke-width=".5" opacity=".75"/><rect x="142.6" y="27.0" width="3.1" height="2.1" fill="none" stroke="#e0f2e2" stroke-width=".5" opacity=".75"/><rect x="194.2" y="71.3" width="4.6" height="2.0" fill="none" stroke="#e0f2e2" stroke-width=".5" opacity=".75"/><rect x="139.4" y="89.2" width="2.0" height="2.1" fill="none" stroke="#e0f2e2" stroke-width=".5" opacity=".75"/><rect x="5.5" y="5.4" width="2.9" height="2.2" fill="none" stroke="#e0f2e2" stroke-width=".5" opacity=".75"/><rect x="154.2" y="129.6" width="2.6" height="2.1" fill="none" stroke="#e0f2e2" stroke-width=".5" opacity=".75"/><rect x="200.2" y="68.7" width="3.4" height="2.3" fill="none" stroke="#e0f2e2" stroke-width=".5" opacity=".75"/><rect x="100.9" y="18.9" width="5.5" height="3.5" fill="none" stroke="#e0f2e2" stroke-width=".5" opacity=".75"/><rect x="91.3" y="116.7" width="5.4" height="3.4" fill="none" stroke="#e0f2e2" stroke-width=".5" opacity=".75"/><rect x="90.6" y="106.1" width="3.6" height="1.9" fill="none" stroke="#e0f2e2" stroke-width=".5" opacity=".75"/><rect x="31.3" y="118.8" width="4.4" height="2.2" fill="none" stroke="#e0f2e2" stroke-width=".5" opacity=".75"/><rect x="154.8" y="117.3" width="2.7" height="3.1" fill="none" stroke="#e0f2e2" stroke-width=".5" opacity=".75"/><rect x="118.4" y="65.6" width="3.3" height="2.9" fill="none" stroke="#e0f2e2" stroke-width=".5" opacity=".75"/><rect x="88.1" y="80.7" width="5.3" height="2.7" fill="none" stroke="#e0f2e2" stroke-width=".5" opacity=".75"/><rect x="168.0" y="1.3" width="3.2" height="3.8" fill="none" stroke="#e0f2e2" stroke-width=".5" opacity=".75"/><rect x="123.2" y="98.7" width="4.0" height="3.4" fill="none" stroke="#e0f2e2" stroke-width=".5" opacity=".75"/><rect x="66.9" y="125.2" width="2.9" height="3.1" fill="none" stroke="#e0f2e2" stroke-width=".5" opacity=".75"/><rect x="66.7" y="128.7" width="3.3" height="2.6" fill="none" stroke="#e0f2e2" stroke-width=".5" opacity=".75"/><rect x="121.3" y="128.1" width="4.7" height="2.2" fill="none" stroke="#e0f2e2" stroke-width=".5" opacity=".75"/><rect x="108.2" y="140.9" width="3.8" height="2.1" fill="none" stroke="#e0f2e2" stroke-width=".5" opacity=".75"/><rect x="197.4" y="103.6" width="4.1" height="1.7" fill="none" stroke="#e0f2e2" stroke-width=".5" opacity=".75"/><rect x="169.0" y="3.4" width="4.7" height="3.0" fill="none" stroke="#e0f2e2" stroke-width=".5" opacity=".75"/><rect x="162.4" y="104.9" width="3.5" height="2.5" fill="none" stroke="#e0f2e2" stroke-width=".5" opacity=".75"/><rect x="31.6" y="83.9" width="2.7" height="1.7" fill="none" stroke="#e0f2e2" stroke-width=".5" opacity=".75"/><rect x="92.7" y="121.4" width="5.2" height="2.1" fill="none" stroke="#e0f2e2" stroke-width=".5" opacity=".75"/><rect x="11.8" y="22.5" width="3.2" height="1.6" fill="none" stroke="#e0f2e2" stroke-width=".5" opacity=".75"/><rect x="171.7" y="60.0" width="4.3" height="2.3" fill="none" stroke="#e0f2e2" stroke-width=".5" opacity=".75"/><rect x="111.3" y="47.5" width="3.1" height="1.8" fill="none" stroke="#e0f2e2" stroke-width=".5" opacity=".75"/><rect x="64.0" y="3.7" width="4.6" height="1.7" fill="none" stroke="#e0f2e2" stroke-width=".5" opacity=".75"/><rect x="166.5" y="59.9" width="4.8" height="2.7" fill="none" stroke="#e0f2e2" stroke-width=".5" opacity=".75"/><rect x="185.2" y="48.0" width="3.8" height="2.4" fill="none" stroke="#e0f2e2" stroke-width=".5" opacity=".75"/><rect x="164.7" y="47.3" width="2.5" height="2.7" fill="none" stroke="#e0f2e2" stroke-width=".5" opacity=".75"/><rect x="164.2" y="10.3" width="4.5" height="1.6" fill="none" stroke="#e0f2e2" stroke-width=".5" opacity=".75"/><rect x="154.4" y="140.0" width="3.4" height="1.5" fill="none" stroke="#e0f2e2" stroke-width=".5" opacity=".75"/><rect x="77.1" y="12.7" width="3.9" height="2.9" fill="none" stroke="#e0f2e2" stroke-width=".5" opacity=".75"/><rect x="5.0" y="51.4" width="2.0" height="1.8" fill="none" stroke="#e0f2e2" stroke-width=".5" opacity=".75"/><rect x="188.4" y="130.0" width="3.0" height="1.9" fill="none" stroke="#e0f2e2" stroke-width=".5" opacity=".75"/><rect x="129.6" y="97.1" width="3.3" height="2.5" fill="none" stroke="#e0f2e2" stroke-width=".5" opacity=".75"/><rect x="107.9" y="38.9" width="5.5" height="2.7" fill="none" stroke="#e0f2e2" stroke-width=".5" opacity=".75"/><rect x="149.1" y="43.1" width="2.6" height="3.8" fill="none" stroke="#e0f2e2" stroke-width=".5" opacity=".75"/><rect x="186.1" y="106.9" width="2.1" height="2.7" fill="none" stroke="#e0f2e2" stroke-width=".5" opacity=".75"/><rect x="163.3" y="44.4" width="2.8" height="2.4" fill="none" stroke="#e0f2e2" stroke-width=".5" opacity=".75"/><rect x="120.0" y="85.2" width="3.9" height="2.8" fill="none" stroke="#e0f2e2" stroke-width=".5" opacity=".75"/><rect x="90.2" y="127.0" width="3.6" height="3.8" fill="none" stroke="#e0f2e2" stroke-width=".5" opacity=".75"/><rect x="191.2" y="89.0" width="5.8" height="2.9" fill="none" stroke="#e0f2e2" stroke-width=".5" opacity=".75"/><rect x="174.1" y="68.8" width="3.6" height="3.9" fill="none" stroke="#e0f2e2" stroke-width=".5" opacity=".75"/><rect x="134.7" y="109.6" width="2.4" height="3.7" fill="none" stroke="#e0f2e2" stroke-width=".5" opacity=".75"/><rect x="81.5" y="30.9" width="2.5" height="3.5" fill="none" stroke="#e0f2e2" stroke-width=".5" opacity=".75"/><rect x="199.1" y="112.8" width="5.1" height="3.5" fill="none" stroke="#e0f2e2" stroke-width=".5" opacity=".75"/><rect x="11.8" y="131.2" width="5.6" height="3.7" fill="none" stroke="#e0f2e2" stroke-width=".5" opacity=".75"/><rect x="184.7" y="63.9" width="3.0" height="2.6" fill="none" stroke="#e0f2e2" stroke-width=".5" opacity=".75"/><rect x="178.5" y="59.0" width="5.1" height="1.9" fill="none" stroke="#e0f2e2" stroke-width=".5" opacity=".75"/><rect x="185.3" y="115.0" width="2.5" height="3.4" fill="none" stroke="#e0f2e2" stroke-width=".5" opacity=".75"/><rect x="126.4" y="73.3" width="2.2" height="2.9" fill="none" stroke="#e0f2e2" stroke-width=".5" opacity=".75"/><rect x="36.4" y="29.0" width="5.7" height="1.9" fill="none" stroke="#e0f2e2" stroke-width=".5" opacity=".75"/><rect x="26.2" y="49.9" width="4.5" height="2.8" fill="none" stroke="#e0f2e2" stroke-width=".5" opacity=".75"/><rect x="181.5" y="98.5" width="2.3" height="3.4" fill="none" stroke="#e0f2e2" stroke-width=".5" opacity=".75"/><rect x="110.9" y="71.8" width="2.1" height="2.0" fill="none" stroke="#e0f2e2" stroke-width=".5" opacity=".75"/><rect x="39.4" y="96.9" width="5.1" height="2.6" fill="none" stroke="#e0f2e2" stroke-width=".5" opacity=".75"/><rect x="7.6" y="58.7" width="4.0" height="3.9" fill="none" stroke="#e0f2e2" stroke-width=".5" opacity=".75"/><rect x="196.6" y="44.9" width="3.6" height="2.9" fill="none" stroke="#e0f2e2" stroke-width=".5" opacity=".75"/><rect x="203.4" y="94.7" width="2.3" height="1.7" fill="none" stroke="#e0f2e2" stroke-width=".5" opacity=".75"/><rect x="28.7" y="94.8" width="4.7" height="3.4" fill="none" stroke="#e0f2e2" stroke-width=".5" opacity=".75"/><rect x="160.0" y="17.3" width="3.8" height="3.7" fill="none" stroke="#e0f2e2" stroke-width=".5" opacity=".75"/><rect x="145.2" y="67.5" width="3.2" height="1.8" fill="none" stroke="#e0f2e2" stroke-width=".5" opacity=".75"/><rect x="157.5" y="121.6" width="5.4" height="3.3" fill="none" stroke="#e0f2e2" stroke-width=".5" opacity=".75"/><rect x="183.9" y="21.6" width="4.5" height="3.8" fill="none" stroke="#e0f2e2" stroke-width=".5" opacity=".75"/><rect x="152.9" y="135.5" width="5.0" height="2.9" fill="none" stroke="#e0f2e2" stroke-width=".5" opacity=".75"/><rect x="17.7" y="26.8" width="3.5" height="1.8" fill="none" stroke="#e0f2e2" stroke-width=".5" opacity=".75"/><rect x="63.2" y="38.9" width="3.9" height="3.1" fill="none" stroke="#e0f2e2" stroke-width=".5" opacity=".75"/><rect x="91.2" y="54.3" width="2.4" height="3.1" fill="none" stroke="#e0f2e2" stroke-width=".5" opacity=".75"/><rect x="26.8" y="89.5" width="2.7" height="2.0" fill="none" stroke="#e0f2e2" stroke-width=".5" opacity=".75"/><rect x="7.4" y="65.8" width="4.8" height="1.8" fill="none" stroke="#e0f2e2" stroke-width=".5" opacity=".75"/><rect x="6.6" y="140.2" width="3.7" height="3.4" fill="none" stroke="#e0f2e2" stroke-width=".5" opacity=".75"/><rect x="69.7" y="116.9" width="5.7" height="1.8" fill="none" stroke="#e0f2e2" stroke-width=".5" opacity=".75"/><rect x="41.9" y="21.0" width="4.8" height="2.7" fill="none" stroke="#e0f2e2" stroke-width=".5" opacity=".75"/><rect x="188.0" y="88.5" width="4.9" height="3.0" fill="none" stroke="#e0f2e2" stroke-width=".5" opacity=".75"/><rect x="64.8" y="112.0" width="3.0" height="4.0" fill="none" stroke="#e0f2e2" stroke-width=".5" opacity=".75"/><rect x="108.1" y="37.0" width="2.8" height="2.3" fill="none" stroke="#e0f2e2" stroke-width=".5" opacity=".75"/><rect x="90.0" y="79.1" width="2.8" height="2.3" fill="none" stroke="#e0f2e2" stroke-width=".5" opacity=".75"/><rect x="59.9" y="14.6" width="4.9" height="2.1" fill="none" stroke="#e0f2e2" stroke-width=".5" opacity=".75"/><rect x="109.9" y="42.4" width="2.9" height="3.0" fill="none" stroke="#e0f2e2" stroke-width=".5" opacity=".75"/><rect x="104.7" y="81.5" width="2.8" height="3.8" fill="none" stroke="#e0f2e2" stroke-width=".5" opacity=".75"/><rect x="203.7" y="100.4" width="5.7" height="2.9" fill="none" stroke="#e0f2e2" stroke-width=".5" opacity=".75"/><rect x="5.4" y="93.6" width="5.1" height="1.8" fill="none" stroke="#e0f2e2" stroke-width=".5" opacity=".75"/><rect x="97.5" y="59.3" width="3.3" height="1.7" fill="none" stroke="#e0f2e2" stroke-width=".5" opacity=".75"/><rect x="178.0" y="37.8" width="5.5" height="2.6" fill="none" stroke="#e0f2e2" stroke-width=".5" opacity=".75"/><rect x="148.9" y="33.9" width="4.3" height="2.9" fill="none" stroke="#e0f2e2" stroke-width=".5" opacity=".75"/><rect x="13.0" y="129.9" width="2.7" height="3.4" fill="none" stroke="#e0f2e2" stroke-width=".5" opacity=".75"/><rect x="183.0" y="47.5" width="2.6" height="3.8" fill="none" stroke="#e0f2e2" stroke-width=".5" opacity=".75"/><rect x="0.8" y="97.3" width="3.5" height="3.4" fill="none" stroke="#e0f2e2" stroke-width=".5" opacity=".75"/><rect x="74.1" y="23.6" width="4.4" height="3.5" fill="none" stroke="#e0f2e2" stroke-width=".5" opacity=".75"/><rect x="92.7" y="57.3" width="5.1" height="3.8" fill="none" stroke="#e0f2e2" stroke-width=".5" opacity=".75"/><rect x="203.8" y="19.6" width="5.0" height="3.6" fill="none" stroke="#e0f2e2" stroke-width=".5" opacity=".75"/><rect x="184.9" y="87.4" width="4.6" height="3.4" fill="none" stroke="#e0f2e2" stroke-width=".5" opacity=".75"/><rect x="32.3" y="58.5" width="2.1" height="2.8" fill="none" stroke="#e0f2e2" stroke-width=".5" opacity=".75"/><rect x="24.1" y="57.6" width="3.3" height="1.8" fill="none" stroke="#e0f2e2" stroke-width=".5" opacity=".75"/><rect x="49.8" y="132.3" width="2.2" height="3.5" fill="none" stroke="#e0f2e2" stroke-width=".5" opacity=".75"/><rect x="147.2" y="111.8" width="3.6" height="2.7" fill="none" stroke="#e0f2e2" stroke-width=".5" opacity=".75"/><rect x="20.9" y="49.1" width="5.6" height="3.8" fill="none" stroke="#e0f2e2" stroke-width=".5" opacity=".75"/><rect x="115.2" y="57.8" width="3.1" height="3.7" fill="none" stroke="#e0f2e2" stroke-width=".5" opacity=".75"/><rect x="94.6" y="128.6" width="4.8" height="3.6" fill="none" stroke="#e0f2e2" stroke-width=".5" opacity=".75"/><rect x="23.9" y="16.3" width="5.8" height="2.3" fill="none" stroke="#e0f2e2" stroke-width=".5" opacity=".75"/><rect x="106.2" y="59.7" width="2.1" height="3.8" fill="none" stroke="#e0f2e2" stroke-width=".5" opacity=".75"/><rect x="60.4" y="87.5" width="3.7" height="2.4" fill="none" stroke="#e0f2e2" stroke-width=".5" opacity=".75"/><rect x="65.7" y="112.1" width="5.5" height="3.7" fill="none" stroke="#e0f2e2" stroke-width=".5" opacity=".75"/><rect x="49.8" y="119.9" width="3.0" height="3.7" fill="none" stroke="#e0f2e2" stroke-width=".5" opacity=".75"/><rect x="198.4" y="67.6" width="2.4" height="3.8" fill="none" stroke="#e0f2e2" stroke-width=".5" opacity=".75"/><rect x="111.2" y="93.3" width="5.8" height="3.7" fill="none" stroke="#e0f2e2" stroke-width=".5" opacity=".75"/><rect x="203.9" y="103.8" width="5.5" height="2.4" fill="none" stroke="#e0f2e2" stroke-width=".5" opacity=".75"/><rect x="111.4" y="80.1" width="2.7" height="3.1" fill="none" stroke="#e0f2e2" stroke-width=".5" opacity=".75"/><rect x="86.0" y="17.4" width="2.3" height="2.8" fill="none" stroke="#e0f2e2" stroke-width=".5" opacity=".75"/><rect x="26.5" y="125.3" width="4.3" height="2.6" fill="none" stroke="#e0f2e2" stroke-width=".5" opacity=".75"/><rect x="60.4" y="103.4" width="2.1" height="1.9" fill="none" stroke="#e0f2e2" stroke-width=".5" opacity=".75"/><rect x="89.9" y="63.9" width="4.1" height="1.9" fill="none" stroke="#e0f2e2" stroke-width=".5" opacity=".75"/><rect x="141.2" y="32.8" width="3.2" height="2.6" fill="none" stroke="#e0f2e2" stroke-width=".5" opacity=".75"/><rect x="64.0" y="46.1" width="2.6" height="3.4" fill="none" stroke="#e0f2e2" stroke-width=".5" opacity=".75"/><rect x="158.4" y="124.8" width="2.8" height="3.6" fill="none" stroke="#e0f2e2" stroke-width=".5" opacity=".75"/><rect x="141.3" y="8.4" width="3.3" height="3.6" fill="none" stroke="#e0f2e2" stroke-width=".5" opacity=".75"/><rect x="183.5" y="2.3" width="4.5" height="3.2" fill="none" stroke="#e0f2e2" stroke-width=".5" opacity=".75"/><rect x="114.2" y="75.7" width="2.9" height="3.9" fill="none" stroke="#e0f2e2" stroke-width=".5" opacity=".75"/><rect x="199.2" y="92.3" width="3.2" height="3.5" fill="none" stroke="#e0f2e2" stroke-width=".5" opacity=".75"/><rect x="196.1" y="38.9" width="3.7" height="3.7" fill="none" stroke="#e0f2e2" stroke-width=".5" opacity=".75"/><rect x="68.3" y="135.9" width="5.1" height="2.5" fill="none" stroke="#e0f2e2" stroke-width=".5" opacity=".75"/><rect x="34.6" y="122.3" width="2.5" height="3.2" fill="none" stroke="#e0f2e2" stroke-width=".5" opacity=".75"/><rect x="54.9" y="102.3" width="4.0" height="2.2" fill="none" stroke="#e0f2e2" stroke-width=".5" opacity=".75"/><rect x="55.8" y="114.1" width="4.1" height="1.8" fill="none" stroke="#e0f2e2" stroke-width=".5" opacity=".75"/><rect x="105.2" y="138.8" width="5.6" height="2.0" fill="none" stroke="#e0f2e2" stroke-width=".5" opacity=".75"/><rect x="46.1" y="18.8" width="4.7" height="2.7" fill="none" stroke="#e0f2e2" stroke-width=".5" opacity=".75"/><rect x="15.6" y="130.2" width="2.3" height="3.8" fill="none" stroke="#e0f2e2" stroke-width=".5" opacity=".75"/><rect x="1.4" y="83.3" width="4.1" height="2.6" fill="none" stroke="#e0f2e2" stroke-width=".5" opacity=".75"/><rect x="116.0" y="23.4" width="6.0" height="2.0" fill="none" stroke="#e0f2e2" stroke-width=".5" opacity=".75"/><rect x="36.6" y="104.3" width="2.1" height="3.5" fill="none" stroke="#e0f2e2" stroke-width=".5" opacity=".75"/><rect x="30.8" y="127.5" width="4.5" height="3.8" fill="none" stroke="#e0f2e2" stroke-width=".5" opacity=".75"/><rect x="119.3" y="0.4" width="5.6" height="1.7" fill="none" stroke="#e0f2e2" stroke-width=".5" opacity=".75"/><rect x="13.1" y="110.3" width="5.6" height="2.3" fill="none" stroke="#e0f2e2" stroke-width=".5" opacity=".75"/><rect x="98.6" y="4.5" width="3.2" height="3.6" fill="none" stroke="#e0f2e2" stroke-width=".5" opacity=".75"/><rect x="129.5" y="139.6" width="5.0" height="2.8" fill="none" stroke="#e0f2e2" stroke-width=".5" opacity=".75"/><rect x="121.2" y="109.5" width="2.4" height="2.6" fill="none" stroke="#e0f2e2" stroke-width=".5" opacity=".75"/><rect x="136.4" y="77.8" width="3.0" height="3.3" fill="none" stroke="#e0f2e2" stroke-width=".5" opacity=".75"/><rect x="147.2" y="36.9" width="4.2" height="3.6" fill="none" stroke="#e0f2e2" stroke-width=".5" opacity=".75"/><rect x="123.1" y="37.1" width="2.8" height="3.9" fill="none" stroke="#e0f2e2" stroke-width=".5" opacity=".75"/><rect x="10.7" y="63.7" width="5.5" height="2.3" fill="none" stroke="#e0f2e2" stroke-width=".5" opacity=".75"/><rect x="124.1" y="86.4" width="5.2" height="2.8" fill="none" stroke="#e0f2e2" stroke-width=".5" opacity=".75"/><rect x="147.5" y="121.6" width="2.1" height="1.8" fill="none" stroke="#e0f2e2" stroke-width=".5" opacity=".75"/><rect x="36.4" y="90.9" width="4.3" height="3.3" fill="none" stroke="#e0f2e2" stroke-width=".5" opacity=".75"/><rect x="127.1" y="7.7" width="3.7" height="3.2" fill="none" stroke="#e0f2e2" stroke-width=".5" opacity=".75"/><rect x="167.2" y="104.9" width="5.1" height="3.4" fill="none" stroke="#e0f2e2" stroke-width=".5" opacity=".75"/><rect x="101.7" y="92.3" width="4.0" height="2.4" fill="none" stroke="#e0f2e2" stroke-width=".5" opacity=".75"/><rect x="50.6" y="70.6" width="4.6" height="3.0" fill="none" stroke="#e0f2e2" stroke-width=".5" opacity=".75"/><rect x="92.7" y="44.8" width="3.9" height="3.2" fill="none" stroke="#e0f2e2" stroke-width=".5" opacity=".75"/><rect x="143.6" y="135.9" width="2.5" height="3.4" fill="none" stroke="#e0f2e2" stroke-width=".5" opacity=".75"/><rect x="122.6" y="19.1" width="5.0" height="2.8" fill="none" stroke="#e0f2e2" stroke-width=".5" opacity=".75"/><rect x="201.1" y="0.5" width="3.6" height="2.8" fill="none" stroke="#e0f2e2" stroke-width=".5" opacity=".75"/><rect x="18.7" y="79.0" width="3.9" height="3.8" fill="none" stroke="#e0f2e2" stroke-width=".5" opacity=".75"/><rect x="198.2" y="96.5" width="4.9" height="3.9" fill="none" stroke="#e0f2e2" stroke-width=".5" opacity=".75"/><rect x="124.9" y="42.0" width="2.5" height="3.6" fill="none" stroke="#e0f2e2" stroke-width=".5" opacity=".75"/><rect x="85.3" y="12.2" width="2.9" height="2.3" fill="none" stroke="#e0f2e2" stroke-width=".5" opacity=".75"/><rect x="193.1" y="131.1" width="2.9" height="1.9" fill="none" stroke="#e0f2e2" stroke-width=".5" opacity=".75"/><rect x="119.4" y="141.3" width="4.9" height="2.9" fill="none" stroke="#e0f2e2" stroke-width=".5" opacity=".75"/><rect x="186.0" y="125.6" width="5.7" height="1.9" fill="none" stroke="#e0f2e2" stroke-width=".5" opacity=".75"/><rect x="175.4" y="132.8" width="2.9" height="2.4" fill="none" stroke="#e0f2e2" stroke-width=".5" opacity=".75"/><rect x="10.0" y="59.4" width="3.0" height="3.5" fill="none" stroke="#e0f2e2" stroke-width=".5" opacity=".75"/><rect x="164.0" y="68.2" width="3.6" height="3.0" fill="none" stroke="#e0f2e2" stroke-width=".5" opacity=".75"/><rect x="155.0" y="67.1" width="4.0" height="3.1" fill="none" stroke="#e0f2e2" stroke-width=".5" opacity=".75"/><rect x="37.0" y="69.2" width="4.2" height="2.5" fill="none" stroke="#e0f2e2" stroke-width=".5" opacity=".75"/><rect x="9.6" y="39.3" width="5.8" height="3.1" fill="none" stroke="#e0f2e2" stroke-width=".5" opacity=".75"/><rect x="105.9" y="105.3" width="4.0" height="2.9" fill="none" stroke="#e0f2e2" stroke-width=".5" opacity=".75"/><rect x="132.5" y="30.9" width="2.4" height="1.6" fill="none" stroke="#e0f2e2" stroke-width=".5" opacity=".75"/><rect x="148.5" y="110.3" width="2.5" height="2.1" fill="none" stroke="#e0f2e2" stroke-width=".5" opacity=".75"/><rect x="171.2" y="16.9" width="6.0" height="3.6" fill="none" stroke="#e0f2e2" stroke-width=".5" opacity=".75"/><rect x="91.8" y="121.3" width="3.5" height="2.1" fill="none" stroke="#e0f2e2" stroke-width=".5" opacity=".75"/><rect x="179.3" y="95.0" width="3.2" height="3.0" fill="none" stroke="#e0f2e2" stroke-width=".5" opacity=".75"/><rect x="99.6" y="26.7" width="4.1" height="1.8" fill="none" stroke="#e0f2e2" stroke-width=".5" opacity=".75"/><rect x="42.5" y="58.3" width="3.9" height="3.2" fill="none" stroke="#e0f2e2" stroke-width=".5" opacity=".75"/><rect x="105.5" y="77.8" width="3.3" height="2.6" fill="none" stroke="#e0f2e2" stroke-width=".5" opacity=".75"/><rect x="76.9" y="125.0" width="5.3" height="2.8" fill="none" stroke="#e0f2e2" stroke-width=".5" opacity=".75"/><rect x="91.7" y="19.4" width="4.1" height="2.4" fill="none" stroke="#e0f2e2" stroke-width=".5" opacity=".75"/><rect x="20.9" y="52.6" width="4.4" height="1.9" fill="none" stroke="#e0f2e2" stroke-width=".5" opacity=".75"/><rect x="173.0" y="106.1" width="3.9" height="1.5" fill="none" stroke="#e0f2e2" stroke-width=".5" opacity=".75"/><rect x="155.4" y="105.5" width="4.6" height="1.7" fill="none" stroke="#e0f2e2" stroke-width=".5" opacity=".75"/><rect x="174.0" y="79.3" width="3.4" height="1.8" fill="none" stroke="#e0f2e2" stroke-width=".5" opacity=".75"/><rect x="158.0" y="53.1" width="5.1" height="2.1" fill="none" stroke="#e0f2e2" stroke-width=".5" opacity=".75"/><rect x="163.1" y="17.0" width="4.0" height="2.7" fill="none" stroke="#e0f2e2" stroke-width=".5" opacity=".75"/><rect x="189.9" y="40.4" width="4.8" height="2.1" fill="none" stroke="#e0f2e2" stroke-width=".5" opacity=".75"/><rect x="188.8" y="28.7" width="5.1" height="2.4" fill="none" stroke="#e0f2e2" stroke-width=".5" opacity=".75"/><rect x="145.3" y="73.9" width="5.0" height="3.8" fill="none" stroke="#e0f2e2" stroke-width=".5" opacity=".75"/><rect x="164.1" y="67.9" width="3.0" height="3.6" fill="none" stroke="#e0f2e2" stroke-width=".5" opacity=".75"/><rect x="62.9" y="129.9" width="5.6" height="1.8" fill="none" stroke="#e0f2e2" stroke-width=".5" opacity=".75"/><rect x="185.6" y="129.6" width="3.1" height="2.4" fill="none" stroke="#e0f2e2" stroke-width=".5" opacity=".75"/><rect x="172.7" y="42.6" width="4.9" height="3.7" fill="none" stroke="#e0f2e2" stroke-width=".5" opacity=".75"/><rect x="14.7" y="5.0" width="3.3" height="2.4" fill="none" stroke="#e0f2e2" stroke-width=".5" opacity=".75"/><rect x="60.7" y="115.8" width="5.5" height="3.1" fill="none" stroke="#e0f2e2" stroke-width=".5" opacity=".75"/><rect x="78.4" y="48.5" width="5.6" height="1.6" fill="none" stroke="#e0f2e2" stroke-width=".5" opacity=".75"/><rect x="144.3" y="30.8" width="2.3" height="1.6" fill="none" stroke="#e0f2e2" stroke-width=".5" opacity=".75"/><rect x="110.7" y="87.0" width="2.3" height="1.7" fill="none" stroke="#e0f2e2" stroke-width=".5" opacity=".75"/><rect x="94.6" y="63.8" width="5.9" height="2.5" fill="none" stroke="#e0f2e2" stroke-width=".5" opacity=".75"/><rect x="164.0" y="97.0" width="3.1" height="2.7" fill="none" stroke="#e0f2e2" stroke-width=".5" opacity=".75"/><rect x="96.5" y="3.0" width="4.4" height="2.2" fill="none" stroke="#e0f2e2" stroke-width=".5" opacity=".75"/><rect x="52.7" y="31.2" width="4.1" height="3.8" fill="none" stroke="#e0f2e2" stroke-width=".5" opacity=".75"/><rect x="199.9" y="0.5" width="4.2" height="3.6" fill="none" stroke="#e0f2e2" stroke-width=".5" opacity=".75"/><rect x="156.1" y="11.2" width="5.3" height="3.7" fill="none" stroke="#e0f2e2" stroke-width=".5" opacity=".75"/><rect x="141.0" y="113.1" width="3.1" height="1.8" fill="none" stroke="#e0f2e2" stroke-width=".5" opacity=".75"/><rect x="4.0" y="114.4" width="2.8" height="2.5" fill="none" stroke="#e0f2e2" stroke-width=".5" opacity=".75"/><rect x="31.9" y="27.3" width="2.6" height="2.3" fill="none" stroke="#e0f2e2" stroke-width=".5" opacity=".75"/><rect x="140.6" y="114.3" width="3.2" height="2.5" fill="none" stroke="#e0f2e2" stroke-width=".5" opacity=".75"/><rect x="74.8" y="94.9" width="4.0" height="3.1" fill="none" stroke="#e0f2e2" stroke-width=".5" opacity=".75"/><rect x="73.9" y="100.3" width="5.7" height="3.3" fill="none" stroke="#e0f2e2" stroke-width=".5" opacity=".75"/><rect x="179.0" y="140.5" width="5.3" height="3.7" fill="none" stroke="#e0f2e2" stroke-width=".5" opacity=".75"/><rect x="63.3" y="120.6" width="4.0" height="3.2" fill="none" stroke="#e0f2e2" stroke-width=".5" opacity=".75"/><rect x="8.2" y="88.3" width="3.7" height="2.7" fill="none" stroke="#e0f2e2" stroke-width=".5" opacity=".75"/><rect x="70.3" y="56.4" width="5.0" height="3.2" fill="none" stroke="#e0f2e2" stroke-width=".5" opacity=".75"/><rect x="51.6" y="90.1" width="3.5" height="3.2" fill="none" stroke="#e0f2e2" stroke-width=".5" opacity=".75"/><rect x="37.5" y="121.6" width="2.8" height="2.9" fill="none" stroke="#e0f2e2" stroke-width=".5" opacity=".75"/><rect x="26.4" y="139.6" width="4.6" height="1.8" fill="none" stroke="#e0f2e2" stroke-width=".5" opacity=".75"/><rect x="151.0" y="38.2" width="2.6" height="2.0" fill="none" stroke="#e0f2e2" stroke-width=".5" opacity=".75"/><rect x="126.7" y="41.5" width="4.6" height="3.9" fill="none" stroke="#e0f2e2" stroke-width=".5" opacity=".75"/><rect x="96.3" y="98.5" width="5.2" height="3.8" fill="none" stroke="#e0f2e2" stroke-width=".5" opacity=".75"/><rect x="54.7" y="38.5" width="3.0" height="3.2" fill="none" stroke="#e0f2e2" stroke-width=".5" opacity=".75"/><rect x="78.9" y="96.5" width="2.6" height="1.9" fill="none" stroke="#e0f2e2" stroke-width=".5" opacity=".75"/><rect x="203.5" y="123.7" width="2.8" height="2.4" fill="none" stroke="#e0f2e2" stroke-width=".5" opacity=".75"/><rect x="109.8" y="113.8" width="3.6" height="3.8" fill="none" stroke="#e0f2e2" stroke-width=".5" opacity=".75"/><rect x="169.9" y="121.5" width="2.7" height="1.7" fill="none" stroke="#e0f2e2" stroke-width=".5" opacity=".75"/><rect x="89.5" y="123.5" width="4.6" height="2.1" fill="none" stroke="#e0f2e2" stroke-width=".5" opacity=".75"/><rect x="149.4" y="58.8" width="0.8" height="1.2" fill="#d4ecd6" opacity=".8"/><rect x="139.7" y="31.2" width="0.9" height="1.5" fill="#d4ecd6" opacity=".8"/><rect x="91.5" y="120.1" width="1.3" height="1.5" fill="#d4ecd6" opacity=".8"/><rect x="182.3" y="62.3" width="0.8" height="1.5" fill="#d4ecd6" opacity=".8"/><rect x="55.9" y="81.9" width="0.9" height="1.0" fill="#d4ecd6" opacity=".8"/><rect x="66.7" y="11.7" width="0.8" height="1.2" fill="#d4ecd6" opacity=".8"/><rect x="115.7" y="21.8" width="0.6" height="1.4" fill="#d4ecd6" opacity=".8"/><rect x="138.7" y="0.6" width="1.0" height="0.7" fill="#d4ecd6" opacity=".8"/><rect x="163.3" y="142.8" width="1.1" height="0.6" fill="#d4ecd6" opacity=".8"/><rect x="72.7" y="80.6" width="1.3" height="0.8" fill="#d4ecd6" opacity=".8"/><rect x="127.7" y="119.1" width="0.9" height="0.8" fill="#d4ecd6" opacity=".8"/><rect x="60.2" y="35.9" width="1.6" height="1.2" fill="#d4ecd6" opacity=".8"/><rect x="194.7" y="6.8" width="1.6" height="1.5" fill="#d4ecd6" opacity=".8"/><rect x="111.6" y="97.2" width="0.9" height="0.6" fill="#d4ecd6" opacity=".8"/><rect x="115.0" y="9.1" width="1.2" height="1.5" fill="#d4ecd6" opacity=".8"/><rect x="13.2" y="52.5" width="1.5" height="0.9" fill="#d4ecd6" opacity=".8"/><rect x="50.7" y="133.1" width="1.2" height="0.9" fill="#d4ecd6" opacity=".8"/><rect x="110.0" y="95.9" width="1.6" height="1.4" fill="#d4ecd6" opacity=".8"/><rect x="193.8" y="69.4" width="1.6" height="1.0" fill="#d4ecd6" opacity=".8"/><rect x="186.1" y="89.8" width="0.6" height="0.7" fill="#d4ecd6" opacity=".8"/><rect x="67.0" y="104.3" width="1.2" height="0.9" fill="#d4ecd6" opacity=".8"/><rect x="205.4" y="90.3" width="1.1" height="0.9" fill="#d4ecd6" opacity=".8"/><rect x="13.8" y="94.1" width="1.3" height="0.9" fill="#d4ecd6" opacity=".8"/><rect x="44.2" y="25.9" width="0.7" height="0.7" fill="#d4ecd6" opacity=".8"/><rect x="63.0" y="29.7" width="1.0" height="0.8" fill="#d4ecd6" opacity=".8"/><rect x="77.2" y="26.3" width="0.6" height="1.0" fill="#d4ecd6" opacity=".8"/><rect x="10.8" y="13.6" width="1.7" height="1.4" fill="#d4ecd6" opacity=".8"/><rect x="157.6" y="3.0" width="0.8" height="0.7" fill="#d4ecd6" opacity=".8"/><rect x="121.9" y="83.3" width="1.0" height="1.1" fill="#d4ecd6" opacity=".8"/><rect x="194.3" y="71.9" width="1.5" height="1.5" fill="#d4ecd6" opacity=".8"/><rect x="168.2" y="10.1" width="1.1" height="1.5" fill="#d4ecd6" opacity=".8"/><rect x="182.5" y="112.0" width="1.2" height="0.6" fill="#d4ecd6" opacity=".8"/><rect x="151.2" y="95.4" width="1.7" height="0.7" fill="#d4ecd6" opacity=".8"/><rect x="127.6" y="49.6" width="1.1" height="1.3" fill="#d4ecd6" opacity=".8"/><rect x="87.8" y="139.6" width="1.7" height="0.7" fill="#d4ecd6" opacity=".8"/><rect x="152.9" y="107.2" width="1.1" height="1.1" fill="#d4ecd6" opacity=".8"/><rect x="173.2" y="72.2" width="1.1" height="1.1" fill="#d4ecd6" opacity=".8"/><rect x="8.8" y="132.5" width="1.2" height="1.1" fill="#d4ecd6" opacity=".8"/><rect x="58.8" y="6.6" width="0.7" height="0.9" fill="#d4ecd6" opacity=".8"/><rect x="111.2" y="47.3" width="0.9" height="1.2" fill="#d4ecd6" opacity=".8"/><rect x="39.0" y="67.5" width="1.3" height="0.7" fill="#d4ecd6" opacity=".8"/><rect x="200.4" y="108.4" width="1.7" height="0.7" fill="#d4ecd6" opacity=".8"/><rect x="38.7" y="133.0" width="1.5" height="0.7" fill="#d4ecd6" opacity=".8"/><rect x="23.7" y="15.0" width="0.9" height="0.9" fill="#d4ecd6" opacity=".8"/><rect x="38.3" y="5.5" width="1.0" height="1.1" fill="#d4ecd6" opacity=".8"/><rect x="72.2" y="29.9" width="0.6" height="1.0" fill="#d4ecd6" opacity=".8"/><rect x="101.2" y="138.5" width="0.9" height="0.7" fill="#d4ecd6" opacity=".8"/><rect x="91.2" y="109.0" width="1.7" height="0.7" fill="#d4ecd6" opacity=".8"/><rect x="102.8" y="8.1" width="1.6" height="1.6" fill="#d4ecd6" opacity=".8"/><rect x="13.6" y="135.6" width="1.6" height="0.8" fill="#d4ecd6" opacity=".8"/><rect x="69.1" y="133.8" width="1.7" height="0.8" fill="#d4ecd6" opacity=".8"/><rect x="59.7" y="59.9" width="1.3" height="0.6" fill="#d4ecd6" opacity=".8"/><rect x="141.2" y="67.1" width="1.2" height="0.7" fill="#d4ecd6" opacity=".8"/><rect x="134.3" y="76.6" width="1.0" height="1.6" fill="#d4ecd6" opacity=".8"/><rect x="200.8" y="80.6" width="1.8" height="1.0" fill="#d4ecd6" opacity=".8"/><rect x="169.0" y="100.8" width="1.6" height="1.5" fill="#d4ecd6" opacity=".8"/><rect x="136.3" y="30.0" width="0.9" height="1.4" fill="#d4ecd6" opacity=".8"/><rect x="35.5" y="83.6" width="0.6" height="0.9" fill="#d4ecd6" opacity=".8"/><rect x="53.5" y="49.5" width="1.3" height="0.9" fill="#d4ecd6" opacity=".8"/><rect x="1.7" y="9.9" width="0.8" height="1.3" fill="#d4ecd6" opacity=".8"/><rect x="180.2" y="110.9" width="0.8" height="0.7" fill="#d4ecd6" opacity=".8"/><rect x="55.0" y="53.9" width="1.3" height="0.9" fill="#d4ecd6" opacity=".8"/><rect x="27.7" y="17.8" width="0.7" height="1.1" fill="#d4ecd6" opacity=".8"/><rect x="86.5" y="70.9" width="0.7" height="0.7" fill="#d4ecd6" opacity=".8"/><rect x="181.5" y="137.1" width="0.7" height="1.2" fill="#d4ecd6" opacity=".8"/><rect x="46.7" y="68.8" width="0.8" height="1.0" fill="#d4ecd6" opacity=".8"/><rect x="45.6" y="92.1" width="1.0" height="0.9" fill="#d4ecd6" opacity=".8"/><rect x="120.9" y="94.8" width="0.9" height="1.3" fill="#d4ecd6" opacity=".8"/><rect x="2.6" y="87.9" width="0.6" height="1.0" fill="#d4ecd6" opacity=".8"/><rect x="122.8" y="124.7" width="1.1" height="0.9" fill="#d4ecd6" opacity=".8"/><rect x="21.1" y="126.7" width="1.5" height="0.7" fill="#d4ecd6" opacity=".8"/><rect x="136.1" y="65.3" width="0.9" height="1.4" fill="#d4ecd6" opacity=".8"/><rect x="3.3" y="4.4" width="1.3" height="1.3" fill="#d4ecd6" opacity=".8"/><rect x="204.9" y="117.5" width="1.6" height="1.3" fill="#d4ecd6" opacity=".8"/><rect x="32.2" y="10.4" width="0.8" height="1.1" fill="#d4ecd6" opacity=".8"/><rect x="99.3" y="93.9" width="0.7" height="0.8" fill="#d4ecd6" opacity=".8"/><rect x="4.3" y="113.8" width="1.1" height="0.8" fill="#d4ecd6" opacity=".8"/><rect x="112.1" y="15.8" width="0.7" height="1.6" fill="#d4ecd6" opacity=".8"/><rect x="135.8" y="113.8" width="1.7" height="1.1" fill="#d4ecd6" opacity=".8"/><rect x="120.9" y="71.6" width="1.6" height="1.1" fill="#d4ecd6" opacity=".8"/><rect x="19.9" y="114.4" width="0.6" height="1.6" fill="#d4ecd6" opacity=".8"/><rect x="144.1" y="113.2" width="1.7" height="1.3" fill="#d4ecd6" opacity=".8"/><rect x="200.8" y="68.2" width="1.7" height="1.0" fill="#d4ecd6" opacity=".8"/><rect x="32.3" y="53.4" width="1.0" height="1.4" fill="#d4ecd6" opacity=".8"/><rect x="182.6" y="15.7" width="1.1" height="1.2" fill="#d4ecd6" opacity=".8"/><rect x="201.7" y="111.8" width="0.7" height="1.6" fill="#d4ecd6" opacity=".8"/><rect x="116.8" y="9.8" width="0.9" height="1.3" fill="#d4ecd6" opacity=".8"/><rect x="105.5" y="44.4" width="1.0" height="0.8" fill="#d4ecd6" opacity=".8"/><rect x="122.3" y="67.2" width="1.8" height="1.2" fill="#d4ecd6" opacity=".8"/><rect x="35.2" y="15.0" width="0.8" height="1.5" fill="#d4ecd6" opacity=".8"/><rect x="167.6" y="72.5" width="0.8" height="1.2" fill="#d4ecd6" opacity=".8"/><rect x="35.9" y="89.0" width="1.8" height="1.3" fill="#d4ecd6" opacity=".8"/><rect x="24.6" y="118.4" width="0.9" height="1.4" fill="#d4ecd6" opacity=".8"/><rect x="22.7" y="106.2" width="1.1" height="0.9" fill="#d4ecd6" opacity=".8"/><rect x="128.1" y="58.3" width="1.2" height="1.5" fill="#d4ecd6" opacity=".8"/><rect x="112.4" y="109.8" width="1.5" height="1.0" fill="#d4ecd6" opacity=".8"/><rect x="62.0" y="30.9" width="1.2" height="1.3" fill="#d4ecd6" opacity=".8"/><rect x="86.8" y="129.0" width="0.8" height="1.6" fill="#d4ecd6" opacity=".8"/><rect x="115.9" y="19.9" width="1.8" height="1.5" fill="#d4ecd6" opacity=".8"/><rect x="20.1" y="90.1" width="0.9" height="1.2" fill="#d4ecd6" opacity=".8"/><rect x="45.6" y="12.2" width="1.6" height="1.0" fill="#d4ecd6" opacity=".8"/><rect x="134.3" y="48.1" width="0.7" height="0.9" fill="#d4ecd6" opacity=".8"/><rect x="109.9" y="23.5" width="1.1" height="0.9" fill="#d4ecd6" opacity=".8"/><rect x="169.5" y="97.2" width="1.5" height="0.6" fill="#d4ecd6" opacity=".8"/><rect x="74.4" y="136.9" width="1.2" height="1.1" fill="#d4ecd6" opacity=".8"/><rect x="151.8" y="53.8" width="1.3" height="0.7" fill="#d4ecd6" opacity=".8"/><rect x="142.3" y="51.4" width="0.9" height="1.6" fill="#d4ecd6" opacity=".8"/><rect x="143.6" y="121.0" width="0.9" height="1.4" fill="#d4ecd6" opacity=".8"/><rect x="11.6" y="26.5" width="0.7" height="1.4" fill="#d4ecd6" opacity=".8"/><rect x="71.3" y="123.2" width="0.9" height="1.2" fill="#d4ecd6" opacity=".8"/><rect x="167.2" y="135.9" width="1.4" height="1.0" fill="#d4ecd6" opacity=".8"/><rect x="18.6" y="82.4" width="0.7" height="1.0" fill="#d4ecd6" opacity=".8"/><rect x="46.6" y="36.0" width="0.6" height="0.7" fill="#d4ecd6" opacity=".8"/><rect x="32.3" y="41.1" width="0.9" height="1.6" fill="#d4ecd6" opacity=".8"/><rect x="101.5" y="56.9" width="0.7" height="0.7" fill="#d4ecd6" opacity=".8"/><rect x="70.4" y="103.3" width="1.3" height="1.3" fill="#d4ecd6" opacity=".8"/><rect x="43.8" y="78.7" width="1.6" height="1.1" fill="#d4ecd6" opacity=".8"/><rect x="69.4" y="90.1" width="1.7" height="1.4" fill="#d4ecd6" opacity=".8"/><rect x="35.7" y="12.0" width="1.4" height="0.7" fill="#d4ecd6" opacity=".8"/><rect x="156.7" y="97.5" width="1.6" height="1.0" fill="#d4ecd6" opacity=".8"/><rect x="185.7" y="104.8" width="1.6" height="1.6" fill="#d4ecd6" opacity=".8"/><rect x="73.7" y="119.8" width="1.5" height="1.3" fill="#d4ecd6" opacity=".8"/><rect x="82.2" y="99.5" width="1.4" height="0.7" fill="#d4ecd6" opacity=".8"/><rect x="179.7" y="14.0" width="1.0" height="0.7" fill="#d4ecd6" opacity=".8"/><rect x="196.1" y="22.3" width="0.9" height="1.0" fill="#d4ecd6" opacity=".8"/><rect x="185.6" y="134.0" width="0.8" height="1.3" fill="#d4ecd6" opacity=".8"/><rect x="102.3" y="62.9" width="1.6" height="1.1" fill="#d4ecd6" opacity=".8"/><rect x="99.7" y="79.1" width="1.6" height="1.4" fill="#d4ecd6" opacity=".8"/><rect x="67.1" y="2.1" width="1.6" height="1.3" fill="#d4ecd6" opacity=".8"/><rect x="78.0" y="115.6" width="1.4" height="1.1" fill="#d4ecd6" opacity=".8"/><rect x="121.9" y="66.6" width="1.5" height="0.7" fill="#d4ecd6" opacity=".8"/><rect x="145.7" y="57.1" width="0.7" height="1.1" fill="#d4ecd6" opacity=".8"/><rect x="130.9" y="50.5" width="1.1" height="0.6" fill="#d4ecd6" opacity=".8"/><rect x="190.8" y="115.6" width="0.9" height="0.8" fill="#d4ecd6" opacity=".8"/><rect x="44.2" y="130.8" width="0.7" height="0.8" fill="#d4ecd6" opacity=".8"/><rect x="85.6" y="76.5" width="1.1" height="0.7" fill="#d4ecd6" opacity=".8"/><rect x="38.5" y="89.3" width="1.4" height="1.1" fill="#d4ecd6" opacity=".8"/><rect x="31.1" y="143.1" width="1.0" height="0.8" fill="#d4ecd6" opacity=".8"/><rect x="101.5" y="70.5" width="1.1" height="1.6" fill="#d4ecd6" opacity=".8"/><rect x="73.9" y="43.5" width="0.9" height="0.8" fill="#d4ecd6" opacity=".8"/><rect x="204.1" y="124.0" width="1.5" height="0.9" fill="#d4ecd6" opacity=".8"/><rect x="33.8" y="27.4" width="0.8" height="1.6" fill="#d4ecd6" opacity=".8"/><rect x="76.3" y="46.7" width="0.7" height="1.4" fill="#d4ecd6" opacity=".8"/><rect x="167.0" y="87.6" width="1.6" height="1.6" fill="#d4ecd6" opacity=".8"/><rect x="22.9" y="51.6" width="0.8" height="1.5" fill="#d4ecd6" opacity=".8"/><rect x="138.2" y="41.3" width="1.3" height="0.9" fill="#d4ecd6" opacity=".8"/><rect x="15.7" y="4.2" width="1.6" height="1.5" fill="#d4ecd6" opacity=".8"/><rect x="31.5" y="56.1" width="1.6" height="1.1" fill="#d4ecd6" opacity=".8"/><rect x="27.1" y="12.9" width="1.6" height="0.8" fill="#d4ecd6" opacity=".8"/><rect x="155.3" y="101.2" width="1.3" height="1.2" fill="#d4ecd6" opacity=".8"/><rect x="63.4" y="61.5" width="1.5" height="1.3" fill="#d4ecd6" opacity=".8"/><rect x="112.3" y="69.3" width="1.4" height="0.9" fill="#d4ecd6" opacity=".8"/><rect x="44.7" y="92.2" width="0.9" height="1.3" fill="#d4ecd6" opacity=".8"/><rect x="183.3" y="10.9" width="1.3" height="1.2" fill="#d4ecd6" opacity=".8"/><rect x="191.8" y="107.0" width="1.0" height="0.6" fill="#d4ecd6" opacity=".8"/><rect x="193.2" y="138.4" width="0.8" height="1.0" fill="#d4ecd6" opacity=".8"/><rect x="73.2" y="20.3" width="1.7" height="1.3" fill="#d4ecd6" opacity=".8"/><rect x="29.1" y="59.5" width="0.8" height="1.5" fill="#d4ecd6" opacity=".8"/><rect x="201.7" y="140.3" width="1.7" height="1.1" fill="#d4ecd6" opacity=".8"/><rect x="90.4" y="97.8" width="0.7" height="1.3" fill="#d4ecd6" opacity=".8"/><rect x="126.8" y="133.2" width="1.7" height="0.7" fill="#d4ecd6" opacity=".8"/><rect x="28.9" y="27.8" width="1.4" height="0.6" fill="#d4ecd6" opacity=".8"/><rect x="194.6" y="129.4" width="0.7" height="1.5" fill="#d4ecd6" opacity=".8"/><rect x="53.0" y="31.6" width="0.9" height="0.8" fill="#d4ecd6" opacity=".8"/><rect x="112.0" y="125.6" width="0.8" height="1.0" fill="#d4ecd6" opacity=".8"/><rect x="164.4" y="87.7" width="1.6" height="1.6" fill="#d4ecd6" opacity=".8"/><rect x="118.3" y="129.4" width="1.0" height="0.8" fill="#d4ecd6" opacity=".8"/><rect x="159.2" y="22.6" width="1.7" height="0.7" fill="#d4ecd6" opacity=".8"/><rect x="61.7" y="43.3" width="1.8" height="1.0" fill="#d4ecd6" opacity=".8"/><rect x="30.9" y="26.8" width="1.3" height="1.4" fill="#d4ecd6" opacity=".8"/><rect x="158.7" y="96.6" width="0.7" height="1.0" fill="#d4ecd6" opacity=".8"/><rect x="198.3" y="31.1" width="1.1" height="0.8" fill="#d4ecd6" opacity=".8"/><rect x="72.6" y="31.6" width="1.1" height="1.5" fill="#d4ecd6" opacity=".8"/><rect x="50.1" y="6.9" width="1.0" height="1.3" fill="#d4ecd6" opacity=".8"/><rect x="107.9" y="50.7" width="1.4" height="1.5" fill="#d4ecd6" opacity=".8"/><rect x="85.7" y="28.9" width="0.9" height="1.1" fill="#d4ecd6" opacity=".8"/><rect x="45.7" y="132.3" width="0.8" height="1.3" fill="#d4ecd6" opacity=".8"/><rect x="126.3" y="85.8" width="1.3" height="1.2" fill="#d4ecd6" opacity=".8"/><rect x="4.6" y="44.8" width="0.7" height="1.1" fill="#d4ecd6" opacity=".8"/><rect x="153.0" y="29.4" width="0.6" height="0.8" fill="#d4ecd6" opacity=".8"/><rect x="19.2" y="98.6" width="1.2" height="1.0" fill="#d4ecd6" opacity=".8"/><rect x="9.3" y="80.2" width="0.8" height="1.3" fill="#d4ecd6" opacity=".8"/><rect x="14.5" y="10.5" width="1.6" height="1.6" fill="#d4ecd6" opacity=".8"/><rect x="86.8" y="96.5" width="0.9" height="1.6" fill="#d4ecd6" opacity=".8"/><rect x="42.8" y="130.6" width="1.3" height="1.5" fill="#d4ecd6" opacity=".8"/><rect x="14.1" y="140.3" width="1.7" height="0.7" fill="#d4ecd6" opacity=".8"/><rect x="6.8" y="137.4" width="1.1" height="0.8" fill="#d4ecd6" opacity=".8"/><rect x="14.0" y="23.0" width="1.2" height="0.8" fill="#d4ecd6" opacity=".8"/><rect x="65.9" y="20.0" width="0.8" height="1.4" fill="#d4ecd6" opacity=".8"/><rect x="66.1" y="6.2" width="0.9" height="1.3" fill="#d4ecd6" opacity=".8"/><rect x="49.1" y="122.3" width="1.7" height="1.3" fill="#d4ecd6" opacity=".8"/><rect x="76.0" y="104.7" width="1.7" height="0.7" fill="#d4ecd6" opacity=".8"/><rect x="180.2" y="141.6" width="1.5" height="1.3" fill="#d4ecd6" opacity=".8"/><rect x="25.5" y="46.3" width="1.3" height="0.9" fill="#d4ecd6" opacity=".8"/><rect x="108.0" y="117.5" width="1.1" height="1.4" fill="#d4ecd6" opacity=".8"/><rect x="54.2" y="13.3" width="1.4" height="0.6" fill="#d4ecd6" opacity=".8"/><rect x="190.8" y="140.5" width="1.7" height="1.3" fill="#d4ecd6" opacity=".8"/><rect x="38.5" y="139.0" width="1.4" height="0.7" fill="#d4ecd6" opacity=".8"/><rect x="100.1" y="128.6" width="1.3" height="1.0" fill="#d4ecd6" opacity=".8"/><rect x="206.5" y="70.3" width="0.6" height="0.7" fill="#d4ecd6" opacity=".8"/><rect x="97.1" y="97.7" width="1.1" height="1.2" fill="#d4ecd6" opacity=".8"/><rect x="112.5" y="40.6" width="0.7" height="1.0" fill="#d4ecd6" opacity=".8"/><rect x="170.3" y="138.4" width="0.6" height="1.0" fill="#d4ecd6" opacity=".8"/><rect x="199.0" y="88.2" width="0.7" height="0.6" fill="#d4ecd6" opacity=".8"/><rect x="70.8" y="24.0" width="1.8" height="0.9" fill="#d4ecd6" opacity=".8"/><rect x="175.5" y="80.9" width="1.4" height="0.9" fill="#d4ecd6" opacity=".8"/><rect x="153.8" y="24.0" width="0.8" height="1.2" fill="#d4ecd6" opacity=".8"/><rect x="126.8" y="61.9" width="1.3" height="0.9" fill="#d4ecd6" opacity=".8"/><rect x="196.5" y="70.8" width="1.4" height="1.2" fill="#d4ecd6" opacity=".8"/><rect x="184.5" y="94.8" width="1.2" height="1.2" fill="#d4ecd6" opacity=".8"/><rect x="190.3" y="110.2" width="1.7" height="0.9" fill="#d4ecd6" opacity=".8"/><rect x="114.9" y="58.1" width="1.4" height="0.9" fill="#d4ecd6" opacity=".8"/><rect x="132.3" y="91.3" width="0.6" height="1.1" fill="#d4ecd6" opacity=".8"/><rect x="23.2" y="107.3" width="1.6" height="1.3" fill="#d4ecd6" opacity=".8"/><rect x="141.9" y="95.4" width="1.1" height="1.1" fill="#d4ecd6" opacity=".8"/><rect x="175.3" y="81.9" width="0.7" height="0.9" fill="#d4ecd6" opacity=".8"/><rect x="132.3" y="8.9" width="0.8" height="0.6" fill="#d4ecd6" opacity=".8"/><rect x="111.5" y="7.2" width="0.9" height="0.7" fill="#d4ecd6" opacity=".8"/><rect x="120.7" y="57.4" width="0.7" height="0.8" fill="#d4ecd6" opacity=".8"/><rect x="131.1" y="14.7" width="1.0" height="0.7" fill="#d4ecd6" opacity=".8"/><rect x="15.0" y="123.7" width="0.8" height="0.9" fill="#d4ecd6" opacity=".8"/><rect x="137.8" y="72.4" width="1.7" height="1.2" fill="#d4ecd6" opacity=".8"/><rect x="142.7" y="64.2" width="1.0" height="1.3" fill="#d4ecd6" opacity=".8"/><rect x="26.5" y="35.5" width="1.5" height="0.9" fill="#d4ecd6" opacity=".8"/><rect x="61.6" y="126.9" width="0.7" height="1.1" fill="#d4ecd6" opacity=".8"/><rect x="147.9" y="6.4" width="1.6" height="1.6" fill="#d4ecd6" opacity=".8"/><rect x="136.2" y="67.8" width="1.4" height="1.3" fill="#d4ecd6" opacity=".8"/><rect x="82.8" y="135.3" width="1.6" height="1.6" fill="#d4ecd6" opacity=".8"/><rect x="33.1" y="37.4" width="0.9" height="1.0" fill="#d4ecd6" opacity=".8"/><rect x="52.6" y="87.9" width="1.5" height="0.9" fill="#d4ecd6" opacity=".8"/><rect x="146.6" y="93.5" width="1.5" height="1.3" fill="#d4ecd6" opacity=".8"/><rect x="90.3" y="58.7" width="1.1" height="1.4" fill="#d4ecd6" opacity=".8"/><rect x="0.5" y="38.1" width="1.2" height="1.5" fill="#d4ecd6" opacity=".8"/><rect x="46.6" y="102.4" width="0.6" height="1.5" fill="#d4ecd6" opacity=".8"/><rect x="103.5" y="141.0" width="0.9" height="1.2" fill="#d4ecd6" opacity=".8"/><rect x="24.4" y="22.1" width="1.1" height="1.1" fill="#d4ecd6" opacity=".8"/><rect x="143.0" y="3.9" width="0.9" height="1.4" fill="#d4ecd6" opacity=".8"/><rect x="21.4" y="47.3" width="0.7" height="0.6" fill="#d4ecd6" opacity=".8"/><rect x="110.3" y="83.6" width="1.0" height="1.1" fill="#d4ecd6" opacity=".8"/><rect x="11.7" y="15.7" width="0.9" height="1.6" fill="#d4ecd6" opacity=".8"/><rect x="13.6" y="13.9" width="1.4" height="0.7" fill="#d4ecd6" opacity=".8"/><rect x="156.6" y="75.8" width="0.9" height="1.5" fill="#d4ecd6" opacity=".8"/><rect x="75.4" y="62.5" width="1.1" height="0.9" fill="#d4ecd6" opacity=".8"/><rect x="198.4" y="42.6" width="1.6" height="1.5" fill="#d4ecd6" opacity=".8"/><rect x="110.0" y="31.0" width="1.7" height="1.4" fill="#d4ecd6" opacity=".8"/><rect x="189.7" y="11.4" width="1.1" height="1.1" fill="#d4ecd6" opacity=".8"/><rect x="86.1" y="90.6" width="1.6" height="1.5" fill="#d4ecd6" opacity=".8"/><rect x="103.5" y="136.4" width="1.3" height="1.0" fill="#d4ecd6" opacity=".8"/><rect x="2.5" y="12.6" width="0.8" height="1.6" fill="#d4ecd6" opacity=".8"/><rect x="127.3" y="26.4" width="1.8" height="1.4" fill="#d4ecd6" opacity=".8"/><rect x="121.0" y="134.6" width="0.9" height="1.4" fill="#d4ecd6" opacity=".8"/><rect x="8.6" y="8.3" width="0.7" height="1.6" fill="#d4ecd6" opacity=".8"/><rect x="197.0" y="27.9" width="0.9" height="1.5" fill="#d4ecd6" opacity=".8"/><rect x="113.9" y="0.3" width="1.2" height="1.2" fill="#d4ecd6" opacity=".8"/><rect x="179.8" y="143.3" width="1.2" height="1.4" fill="#d4ecd6" opacity=".8"/><rect x="50.7" y="117.3" width="0.9" height="1.5" fill="#d4ecd6" opacity=".8"/><rect x="84.6" y="12.5" width="1.3" height="0.8" fill="#d4ecd6" opacity=".8"/><rect x="118.1" y="58.0" width="1.1" height="1.3" fill="#d4ecd6" opacity=".8"/><rect x="151.2" y="89.1" width="0.8" height="0.8" fill="#d4ecd6" opacity=".8"/><rect x="153.5" y="142.1" width="1.6" height="1.5" fill="#d4ecd6" opacity=".8"/><rect x="132.1" y="48.3" width="0.6" height="1.4" fill="#d4ecd6" opacity=".8"/><rect x="149.2" y="83.1" width="1.5" height="1.5" fill="#d4ecd6" opacity=".8"/><rect x="39.7" y="4.9" width="0.7" height="0.9" fill="#d4ecd6" opacity=".8"/><rect x="42.9" y="95.4" width="0.8" height="1.0" fill="#d4ecd6" opacity=".8"/><rect x="43.7" y="3.4" width="1.6" height="1.2" fill="#d4ecd6" opacity=".8"/><rect x="18.4" y="105.8" width="1.4" height="1.2" fill="#d4ecd6" opacity=".8"/><rect x="136.5" y="97.6" width="1.2" height="1.4" fill="#d4ecd6" opacity=".8"/><rect x="192.5" y="127.6" width="0.7" height="0.8" fill="#d4ecd6" opacity=".8"/><rect x="47.4" y="87.0" width="1.3" height="1.6" fill="#d4ecd6" opacity=".8"/><rect x="94.1" y="30.6" width="1.0" height="1.2" fill="#d4ecd6" opacity=".8"/><rect x="17.6" y="84.5" width="1.5" height="1.2" fill="#d4ecd6" opacity=".8"/><rect x="81.0" y="120.9" width="1.0" height="1.0" fill="#d4ecd6" opacity=".8"/><rect x="18.7" y="54.7" width="1.6" height="0.9" fill="#d4ecd6" opacity=".8"/><rect x="197.8" y="107.6" width="1.1" height="1.1" fill="#d4ecd6" opacity=".8"/><rect x="10.7" y="31.0" width="1.4" height="0.7" fill="#d4ecd6" opacity=".8"/><rect x="202.4" y="102.6" width="1.0" height="1.0" fill="#d4ecd6" opacity=".8"/><rect x="99.0" y="36.9" width="1.4" height="1.0" fill="#d4ecd6" opacity=".8"/><rect x="32.5" y="3.6" width="1.5" height="1.2" fill="#d4ecd6" opacity=".8"/><rect x="167.6" y="73.3" width="0.6" height="1.4" fill="#d4ecd6" opacity=".8"/><rect x="71.0" y="137.3" width="1.0" height="1.5" fill="#d4ecd6" opacity=".8"/><rect x="164.2" y="71.2" width="1.2" height="1.5" fill="#d4ecd6" opacity=".8"/><rect x="200.2" y="97.3" width="0.7" height="0.6" fill="#d4ecd6" opacity=".8"/><rect x="95.8" y="80.2" width="1.1" height="0.6" fill="#d4ecd6" opacity=".8"/><rect x="60.1" y="62.3" width="0.7" height="0.6" fill="#d4ecd6" opacity=".8"/><rect x="113.0" y="24.2" width="1.0" height="0.8" fill="#d4ecd6" opacity=".8"/><rect x="146.0" y="21.1" width="1.3" height="1.1" fill="#d4ecd6" opacity=".8"/><rect x="111.7" y="57.3" width="1.1" height="1.4" fill="#d4ecd6" opacity=".8"/><rect x="129.7" y="120.2" width="1.3" height="0.8" fill="#d4ecd6" opacity=".8"/><rect x="5.3" y="131.1" width="1.4" height="0.6" fill="#d4ecd6" opacity=".8"/><rect x="39.6" y="3.0" width="0.7" height="1.2" fill="#d4ecd6" opacity=".8"/><rect x="137.8" y="41.9" width="1.0" height="1.2" fill="#d4ecd6" opacity=".8"/><rect x="75.0" y="46.3" width="1.6" height="1.5" fill="#d4ecd6" opacity=".8"/><rect x="175.1" y="101.0" width="0.6" height="1.5" fill="#d4ecd6" opacity=".8"/><rect x="163.2" y="40.5" width="1.2" height="1.0" fill="#d4ecd6" opacity=".8"/><rect x="113.6" y="86.7" width="1.0" height="1.2" fill="#d4ecd6" opacity=".8"/><rect x="190.8" y="113.5" width="1.7" height="0.8" fill="#d4ecd6" opacity=".8"/><rect x="37.7" y="85.3" width="1.5" height="1.1" fill="#d4ecd6" opacity=".8"/><rect x="125.2" y="50.1" width="1.5" height="0.9" fill="#d4ecd6" opacity=".8"/><rect x="176.8" y="69.0" width="0.7" height="1.1" fill="#d4ecd6" opacity=".8"/><rect x="138.4" y="122.4" width="1.5" height="1.4" fill="#d4ecd6" opacity=".8"/><rect x="140.8" y="135.5" width="0.6" height="0.9" fill="#d4ecd6" opacity=".8"/><rect x="122.9" y="109.7" width="1.2" height="1.1" fill="#d4ecd6" opacity=".8"/><rect x="80.0" y="114.2" width="1.1" height="1.5" fill="#d4ecd6" opacity=".8"/><rect x="127.2" y="79.7" width="0.7" height="0.8" fill="#d4ecd6" opacity=".8"/><rect x="140.5" y="7.7" width="1.5" height="0.8" fill="#d4ecd6" opacity=".8"/><rect x="4.2" y="36.0" width="0.6" height="1.5" fill="#d4ecd6" opacity=".8"/><rect x="62.0" y="2.2" width="1.0" height="1.0" fill="#d4ecd6" opacity=".8"/><rect x="35.7" y="24.9" width="0.8" height="0.7" fill="#d4ecd6" opacity=".8"/><rect x="140.2" y="27.4" width="1.3" height="1.5" fill="#d4ecd6" opacity=".8"/><rect x="180.7" y="115.1" width="1.1" height="1.3" fill="#d4ecd6" opacity=".8"/><rect x="50.5" y="117.6" width="1.0" height="0.9" fill="#d4ecd6" opacity=".8"/><rect x="91.9" y="82.8" width="1.8" height="1.4" fill="#d4ecd6" opacity=".8"/><rect x="174.9" y="41.0" width="1.0" height="1.0" fill="#d4ecd6" opacity=".8"/><rect x="134.1" y="5.7" width="1.1" height="1.1" fill="#d4ecd6" opacity=".8"/><rect x="76.1" y="132.9" width="1.3" height="1.1" fill="#d4ecd6" opacity=".8"/><rect x="76.9" y="136.0" width="0.7" height="1.1" fill="#d4ecd6" opacity=".8"/><rect x="46.9" y="83.6" width="1.4" height="1.5" fill="#d4ecd6" opacity=".8"/><rect x="40.3" y="15.8" width="1.2" height="0.9" fill="#d4ecd6" opacity=".8"/><rect x="88.3" y="80.1" width="0.6" height="0.9" fill="#d4ecd6" opacity=".8"/><rect x="73.9" y="137.5" width="1.2" height="0.7" fill="#d4ecd6" opacity=".8"/><rect x="179.4" y="115.0" width="1.5" height="1.4" fill="#d4ecd6" opacity=".8"/><rect x="92.7" y="142.5" width="1.7" height="1.2" fill="#d4ecd6" opacity=".8"/><rect x="113.2" y="8.1" width="1.5" height="0.7" fill="#d4ecd6" opacity=".8"/><rect x="154.1" y="34.9" width="1.2" height="1.5" fill="#d4ecd6" opacity=".8"/><rect x="135.0" y="117.0" width="1.8" height="1.5" fill="#d4ecd6" opacity=".8"/><rect x="127.2" y="1.8" width="1.5" height="1.5" fill="#d4ecd6" opacity=".8"/><rect x="125.0" y="35.0" width="1.0" height="0.8" fill="#d4ecd6" opacity=".8"/><rect x="184.5" y="75.3" width="1.8" height="0.8" fill="#d4ecd6" opacity=".8"/><rect x="39.0" y="114.7" width="0.9" height="0.8" fill="#d4ecd6" opacity=".8"/><rect x="71.2" y="104.6" width="1.5" height="1.4" fill="#d4ecd6" opacity=".8"/><rect x="131.3" y="106.6" width="1.7" height="1.2" fill="#d4ecd6" opacity=".8"/><rect x="203.8" y="115.9" width="1.7" height="1.3" fill="#d4ecd6" opacity=".8"/><rect x="66.2" y="16.6" width="0.6" height="1.3" fill="#d4ecd6" opacity=".8"/><rect x="179.2" y="43.8" width="1.7" height="1.3" fill="#d4ecd6" opacity=".8"/><rect x="80.2" y="93.3" width="1.1" height="1.3" fill="#d4ecd6" opacity=".8"/><rect x="7.3" y="85.1" width="0.9" height="0.8" fill="#d4ecd6" opacity=".8"/><rect x="17.2" y="36.2" width="1.4" height="1.0" fill="#d4ecd6" opacity=".8"/><rect x="193.7" y="95.8" width="0.7" height="1.2" fill="#d4ecd6" opacity=".8"/><rect x="134.8" y="99.6" width="1.7" height="0.9" fill="#d4ecd6" opacity=".8"/><rect x="1.5" y="59.1" width="1.3" height="0.7" fill="#d4ecd6" opacity=".8"/><rect x="52.5" y="16.8" width="1.0" height="1.2" fill="#d4ecd6" opacity=".8"/><rect x="115.4" y="56.1" width="1.7" height="1.2" fill="#d4ecd6" opacity=".8"/><rect x="125.8" y="29.4" width="0.6" height="1.3" fill="#d4ecd6" opacity=".8"/><rect x="133.4" y="90.2" width="1.1" height="1.1" fill="#d4ecd6" opacity=".8"/><rect x="8.9" y="78.1" width="1.8" height="0.7" fill="#d4ecd6" opacity=".8"/><rect x="79.4" y="32.5" width="1.1" height="1.0" fill="#d4ecd6" opacity=".8"/><rect x="33.8" y="52.4" width="1.7" height="1.0" fill="#d4ecd6" opacity=".8"/><rect x="13.9" y="39.9" width="1.3" height="1.5" fill="#d4ecd6" opacity=".8"/><rect x="50.0" y="93.2" width="0.8" height="1.3" fill="#d4ecd6" opacity=".8"/><rect x="28.7" y="49.3" width="1.8" height="1.4" fill="#d4ecd6" opacity=".8"/><rect x="122.7" y="33.1" width="0.8" height="1.1" fill="#d4ecd6" opacity=".8"/><rect x="90.5" y="10.6" width="1.2" height="0.7" fill="#d4ecd6" opacity=".8"/><rect x="171.1" y="114.0" width="1.1" height="1.0" fill="#d4ecd6" opacity=".8"/><rect x="154.6" y="13.9" width="0.6" height="0.9" fill="#d4ecd6" opacity=".8"/><rect x="204.4" y="4.0" width="1.6" height="1.5" fill="#d4ecd6" opacity=".8"/><rect x="87.5" y="113.6" width="1.6" height="0.9" fill="#d4ecd6" opacity=".8"/><rect x="59.2" y="95.7" width="0.8" height="1.4" fill="#d4ecd6" opacity=".8"/><rect x="182.5" y="133.1" width="0.7" height="1.3" fill="#d4ecd6" opacity=".8"/><rect x="54.6" y="42.8" width="0.9" height="1.6" fill="#d4ecd6" opacity=".8"/><rect x="20.5" y="105.6" width="1.4" height="1.2" fill="#d4ecd6" opacity=".8"/><rect x="179.1" y="49.2" width="0.9" height="1.2" fill="#d4ecd6" opacity=".8"/><rect x="25.0" y="59.8" width="1.4" height="1.2" fill="#d4ecd6" opacity=".8"/><rect x="140.1" y="83.1" width="1.7" height="1.5" fill="#d4ecd6" opacity=".8"/><rect x="57.4" y="33.7" width="1.2" height="0.9" fill="#d4ecd6" opacity=".8"/><rect x="118.4" y="37.4" width="1.2" height="0.7" fill="#d4ecd6" opacity=".8"/><rect x="160.9" y="94.4" width="1.1" height="1.2" fill="#d4ecd6" opacity=".8"/><rect x="43.2" y="137.6" width="1.1" height="0.9" fill="#d4ecd6" opacity=".8"/><rect x="138.3" y="124.2" width="0.6" height="0.8" fill="#d4ecd6" opacity=".8"/><rect x="104.8" y="87.2" width="1.3" height="0.9" fill="#d4ecd6" opacity=".8"/><rect x="78.7" y="87.5" width="1.5" height="0.7" fill="#d4ecd6" opacity=".8"/><rect x="142.3" y="90.3" width="1.4" height="1.1" fill="#d4ecd6" opacity=".8"/><rect x="105.0" y="3.9" width="1.1" height="1.5" fill="#d4ecd6" opacity=".8"/><rect x="165.9" y="25.6" width="1.2" height="1.1" fill="#d4ecd6" opacity=".8"/><rect x="139.2" y="38.6" width="1.3" height="0.8" fill="#d4ecd6" opacity=".8"/><rect x="149.8" y="112.5" width="1.2" height="1.2" fill="#d4ecd6" opacity=".8"/><rect x="189.4" y="94.4" width="1.8" height="0.7" fill="#d4ecd6" opacity=".8"/><rect x="124.0" y="98.7" width="1.1" height="1.4" fill="#d4ecd6" opacity=".8"/><rect x="112.9" y="28.0" width="1.4" height="1.0" fill="#d4ecd6" opacity=".8"/><rect x="133.8" y="53.2" width="1.7" height="0.7" fill="#d4ecd6" opacity=".8"/><rect x="140.0" y="36.9" width="0.9" height="1.1" fill="#d4ecd6" opacity=".8"/><rect x="173.2" y="135.5" width="0.7" height="1.2" fill="#d4ecd6" opacity=".8"/><rect x="98.5" y="14.5" width="1.3" height="1.5" fill="#d4ecd6" opacity=".8"/><rect x="33.2" y="50.1" width="0.7" height="1.3" fill="#d4ecd6" opacity=".8"/><rect x="178.1" y="132.3" width="1.0" height="1.2" fill="#d4ecd6" opacity=".8"/><rect x="76.9" y="61.4" width="1.4" height="0.8" fill="#d4ecd6" opacity=".8"/><rect x="11.1" y="77.7" width="1.0" height="1.0" fill="#d4ecd6" opacity=".8"/><rect x="59.2" y="61.1" width="0.9" height="1.0" fill="#d4ecd6" opacity=".8"/><rect x="176.4" y="69.4" width="1.7" height="0.8" fill="#d4ecd6" opacity=".8"/><rect x="55.1" y="77.6" width="1.0" height="1.0" fill="#d4ecd6" opacity=".8"/><rect x="20.1" y="138.1" width="1.5" height="0.7" fill="#d4ecd6" opacity=".8"/><rect x="126.0" y="60.5" width="0.9" height="1.6" fill="#d4ecd6" opacity=".8"/><rect x="141.9" y="133.8" width="1.4" height="1.5" fill="#d4ecd6" opacity=".8"/><rect x="16.7" y="17.0" width="1.4" height="1.1" fill="#d4ecd6" opacity=".8"/><rect x="199.2" y="137.3" width="1.1" height="1.2" fill="#d4ecd6" opacity=".8"/><rect x="20.3" y="33.2" width="0.8" height="1.2" fill="#d4ecd6" opacity=".8"/><rect x="64.3" y="55.3" width="1.7" height="1.3" fill="#d4ecd6" opacity=".8"/><rect x="0.7" y="24.3" width="0.8" height="0.8" fill="#d4ecd6" opacity=".8"/><rect x="23.5" y="126.3" width="1.5" height="1.2" fill="#d4ecd6" opacity=".8"/><rect x="32.0" y="47.9" width="0.8" height="1.6" fill="#d4ecd6" opacity=".8"/><rect x="58.2" y="7.0" width="1.4" height="1.0" fill="#d4ecd6" opacity=".8"/><rect x="15.6" y="79.6" width="1.8" height="0.9" fill="#d4ecd6" opacity=".8"/><rect x="83.1" y="132.5" width="1.5" height="1.4" fill="#d4ecd6" opacity=".8"/><rect x="188.6" y="25.7" width="1.2" height="0.9" fill="#d4ecd6" opacity=".8"/><rect x="86.5" y="111.5" width="1.7" height="1.0" fill="#d4ecd6" opacity=".8"/><rect x="32.6" y="65.9" width="0.8" height="0.7" fill="#d4ecd6" opacity=".8"/><rect x="86.3" y="134.0" width="1.8" height="1.4" fill="#d4ecd6" opacity=".8"/><rect x="49.4" y="121.6" width="1.2" height="1.1" fill="#d4ecd6" opacity=".8"/><rect x="58.7" y="24.7" width="1.2" height="1.5" fill="#d4ecd6" opacity=".8"/><rect x="123.2" y="37.8" width="0.9" height="1.3" fill="#d4ecd6" opacity=".8"/><rect x="179.8" y="134.9" width="0.9" height="0.7" fill="#d4ecd6" opacity=".8"/><rect x="105.4" y="33.3" width="0.9" height="1.0" fill="#d4ecd6" opacity=".8"/><rect x="175.2" y="70.0" width="0.8" height="0.7" fill="#d4ecd6" opacity=".8"/><rect x="46.6" y="87.3" width="0.9" height="0.7" fill="#d4ecd6" opacity=".8"/><rect x="104.7" y="74.7" width="1.8" height="1.4" fill="#d4ecd6" opacity=".8"/><rect x="164.2" y="112.7" width="1.1" height="0.8" fill="#d4ecd6" opacity=".8"/><rect x="202.7" y="131.2" width="1.5" height="0.7" fill="#d4ecd6" opacity=".8"/><rect x="51.8" y="67.0" width="1.3" height="0.9" fill="#d4ecd6" opacity=".8"/><rect x="142.5" y="22.2" width="0.9" height="1.3" fill="#d4ecd6" opacity=".8"/><rect x="9.2" y="55.4" width="1.3" height="1.6" fill="#d4ecd6" opacity=".8"/><rect x="36.0" y="131.2" width="1.3" height="1.2" fill="#d4ecd6" opacity=".8"/><rect x="142.1" y="139.2" width="2.2" height="1.6" fill="#c8d4c8"/><rect x="142.1" y="142.6" width="2.2" height="1.6" fill="#c8d4c8"/><rect x="127.8" y="75.9" width="2.2" height="1.6" fill="#c8d4c8"/><rect x="127.8" y="79.3" width="2.2" height="1.6" fill="#c8d4c8"/><rect x="99.4" y="13.4" width="1.6" height="2.2" fill="#c8d4c8"/><rect x="102.8" y="13.4" width="1.6" height="2.2" fill="#c8d4c8"/><rect x="142.0" y="133.8" width="2.2" height="1.6" fill="#c8d4c8"/><rect x="142.0" y="137.2" width="2.2" height="1.6" fill="#c8d4c8"/><rect x="189.3" y="114.5" width="1.6" height="2.2" fill="#c8d4c8"/><rect x="192.7" y="114.5" width="1.6" height="2.2" fill="#c8d4c8"/><rect x="97.4" y="29.7" width="2.2" height="1.6" fill="#c8d4c8"/><rect x="97.4" y="33.1" width="2.2" height="1.6" fill="#c8d4c8"/><rect x="158.1" y="70.5" width="1.6" height="2.2" fill="#c8d4c8"/><rect x="161.5" y="70.5" width="1.6" height="2.2" fill="#c8d4c8"/><rect x="85.1" y="11.8" width="2.2" height="1.6" fill="#c8d4c8"/><rect x="85.1" y="15.2" width="2.2" height="1.6" fill="#c8d4c8"/><rect x="112.5" y="34.4" width="1.6" height="2.2" fill="#c8d4c8"/><rect x="115.9" y="34.4" width="1.6" height="2.2" fill="#c8d4c8"/><rect x="99.0" y="45.2" width="2.2" height="1.6" fill="#c8d4c8"/><rect x="99.0" y="48.6" width="2.2" height="1.6" fill="#c8d4c8"/><rect x="89.0" y="36.6" width="1.6" height="2.2" fill="#c8d4c8"/><rect x="92.4" y="36.6" width="1.6" height="2.2" fill="#c8d4c8"/><rect x="126.3" y="107.5" width="2.2" height="1.6" fill="#c8d4c8"/><rect x="126.3" y="110.9" width="2.2" height="1.6" fill="#c8d4c8"/><rect x="25.1" y="48.5" width="2.2" height="1.6" fill="#c8d4c8"/><rect x="25.1" y="51.9" width="2.2" height="1.6" fill="#c8d4c8"/><rect x="35.8" y="93.2" width="2.2" height="1.6" fill="#c8d4c8"/><rect x="35.8" y="96.6" width="2.2" height="1.6" fill="#c8d4c8"/><rect x="36.3" y="87.6" width="1.6" height="2.2" fill="#c8d4c8"/><rect x="39.7" y="87.6" width="1.6" height="2.2" fill="#c8d4c8"/><rect x="64.3" y="42.0" width="1.6" height="2.2" fill="#c8d4c8"/><rect x="67.7" y="42.0" width="1.6" height="2.2" fill="#c8d4c8"/><rect x="15.9" y="64.4" width="1.6" height="2.2" fill="#c8d4c8"/><rect x="19.3" y="64.4" width="1.6" height="2.2" fill="#c8d4c8"/><rect x="27.0" y="44.4" width="1.6" height="2.2" fill="#c8d4c8"/><rect x="30.4" y="44.4" width="1.6" height="2.2" fill="#c8d4c8"/><rect x="105.4" y="123.7" width="2.2" height="1.6" fill="#c8d4c8"/><rect x="105.4" y="127.1" width="2.2" height="1.6" fill="#c8d4c8"/><rect x="151.2" y="127.2" width="2.2" height="1.6" fill="#c8d4c8"/><rect x="151.2" y="130.6" width="2.2" height="1.6" fill="#c8d4c8"/><rect x="166.8" y="108.6" width="1.6" height="2.2" fill="#c8d4c8"/><rect x="170.2" y="108.6" width="1.6" height="2.2" fill="#c8d4c8"/><rect x="166.1" y="105.9" width="2.2" height="1.6" fill="#c8d4c8"/><rect x="166.1" y="109.3" width="2.2" height="1.6" fill="#c8d4c8"/><rect x="195.3" y="110.5" width="1.6" height="2.2" fill="#c8d4c8"/><rect x="198.7" y="110.5" width="1.6" height="2.2" fill="#c8d4c8"/><rect x="28.4" y="24.0" width="2.2" height="1.6" fill="#c8d4c8"/><rect x="28.4" y="27.4" width="2.2" height="1.6" fill="#c8d4c8"/><rect x="127.6" y="86.6" width="1.6" height="2.2" fill="#c8d4c8"/><rect x="131.0" y="86.6" width="1.6" height="2.2" fill="#c8d4c8"/><rect x="67.9" y="59.5" width="1.6" height="2.2" fill="#c8d4c8"/><rect x="71.3" y="59.5" width="1.6" height="2.2" fill="#c8d4c8"/><rect x="76.8" y="128.5" width="1.6" height="2.2" fill="#c8d4c8"/><rect x="80.2" y="128.5" width="1.6" height="2.2" fill="#c8d4c8"/><rect x="70.6" y="92.0" width="2.2" height="1.6" fill="#c8d4c8"/><rect x="70.6" y="95.4" width="2.2" height="1.6" fill="#c8d4c8"/><rect x="154.0" y="25.8" width="1.6" height="2.2" fill="#c8d4c8"/><rect x="157.4" y="25.8" width="1.6" height="2.2" fill="#c8d4c8"/><rect x="132.8" y="60.8" width="1.6" height="2.2" fill="#c8d4c8"/><rect x="136.2" y="60.8" width="1.6" height="2.2" fill="#c8d4c8"/><rect x="12.1" y="66.1" width="2.2" height="1.6" fill="#c8d4c8"/><rect x="12.1" y="69.5" width="2.2" height="1.6" fill="#c8d4c8"/><rect x="121.1" y="80.5" width="2.2" height="1.6" fill="#c8d4c8"/><rect x="121.1" y="83.9" width="2.2" height="1.6" fill="#c8d4c8"/><rect x="99.4" y="136.5" width="1.6" height="2.2" fill="#c8d4c8"/><rect x="102.8" y="136.5" width="1.6" height="2.2" fill="#c8d4c8"/><rect x="132.2" y="89.0" width="1.6" height="2.2" fill="#c8d4c8"/><rect x="135.6" y="89.0" width="1.6" height="2.2" fill="#c8d4c8"/><rect x="134.0" y="62.5" width="2.2" height="1.6" fill="#c8d4c8"/><rect x="134.0" y="65.9" width="2.2" height="1.6" fill="#c8d4c8"/><rect x="177.1" y="70.2" width="2.2" height="1.6" fill="#c8d4c8"/><rect x="177.1" y="73.6" width="2.2" height="1.6" fill="#c8d4c8"/><rect x="131.1" y="51.9" width="1.6" height="2.2" fill="#c8d4c8"/><rect x="134.5" y="51.9" width="1.6" height="2.2" fill="#c8d4c8"/><rect x="184.9" y="12.9" width="1.6" height="2.2" fill="#c8d4c8"/><rect x="188.3" y="12.9" width="1.6" height="2.2" fill="#c8d4c8"/><rect x="171.1" y="128.9" width="1.6" height="2.2" fill="#c8d4c8"/><rect x="174.5" y="128.9" width="1.6" height="2.2" fill="#c8d4c8"/><rect x="57.8" y="120.3" width="2.2" height="1.6" fill="#c8d4c8"/><rect x="57.8" y="123.7" width="2.2" height="1.6" fill="#c8d4c8"/><rect x="70.6" y="136.3" width="1.6" height="2.2" fill="#c8d4c8"/><rect x="74.0" y="136.3" width="1.6" height="2.2" fill="#c8d4c8"/><rect x="157.8" y="112.7" width="2.2" height="1.6" fill="#c8d4c8"/><rect x="157.8" y="116.1" width="2.2" height="1.6" fill="#c8d4c8"/><rect x="193.1" y="124.4" width="2.2" height="1.6" fill="#c8d4c8"/><rect x="193.1" y="127.8" width="2.2" height="1.6" fill="#c8d4c8"/><rect x="141.6" y="21.9" width="2.2" height="1.6" fill="#c8d4c8"/><rect x="141.6" y="25.3" width="2.2" height="1.6" fill="#c8d4c8"/><rect x="114.2" y="131.9" width="2.2" height="1.6" fill="#c8d4c8"/><rect x="114.2" y="135.3" width="2.2" height="1.6" fill="#c8d4c8"/><rect x="181.7" y="94.9" width="1.6" height="2.2" fill="#c8d4c8"/><rect x="185.1" y="94.9" width="1.6" height="2.2" fill="#c8d4c8"/><rect x="71.2" y="11.6" width="1.6" height="2.2" fill="#c8d4c8"/><rect x="74.6" y="11.6" width="1.6" height="2.2" fill="#c8d4c8"/><rect x="23.2" y="111.5" width="1.6" height="2.2" fill="#c8d4c8"/><rect x="26.6" y="111.5" width="1.6" height="2.2" fill="#c8d4c8"/><rect x="139.4" y="87.8" width="1.6" height="2.2" fill="#c8d4c8"/><rect x="142.8" y="87.8" width="1.6" height="2.2" fill="#c8d4c8"/><rect x="37.4" y="48.5" width="1.6" height="2.2" fill="#c8d4c8"/><rect x="40.8" y="48.5" width="1.6" height="2.2" fill="#c8d4c8"/><rect x="155.5" y="26.5" width="2.2" height="1.6" fill="#c8d4c8"/><rect x="155.5" y="29.9" width="2.2" height="1.6" fill="#c8d4c8"/><rect x="191.3" y="28.4" width="1.6" height="2.2" fill="#c8d4c8"/><rect x="194.7" y="28.4" width="1.6" height="2.2" fill="#c8d4c8"/><rect x="95.4" y="12.9" width="2.2" height="1.6" fill="#c8d4c8"/><rect x="95.4" y="16.3" width="2.2" height="1.6" fill="#c8d4c8"/><rect x="8.9" y="69.4" width="1.6" height="2.2" fill="#c8d4c8"/><rect x="12.3" y="69.4" width="1.6" height="2.2" fill="#c8d4c8"/><rect x="20.4" y="137.6" width="2.2" height="1.6" fill="#c8d4c8"/><rect x="20.4" y="141.0" width="2.2" height="1.6" fill="#c8d4c8"/><rect x="13.0" y="42.3" width="1.6" height="2.2" fill="#c8d4c8"/><rect x="16.4" y="42.3" width="1.6" height="2.2" fill="#c8d4c8"/><rect x="107.8" y="13.5" width="2.2" height="1.6" fill="#c8d4c8"/><rect x="107.8" y="16.9" width="2.2" height="1.6" fill="#c8d4c8"/><rect x="66.8" y="132.0" width="1.6" height="2.2" fill="#c8d4c8"/><rect x="70.2" y="132.0" width="1.6" height="2.2" fill="#c8d4c8"/><rect x="93.2" y="128.3" width="1.6" height="2.2" fill="#c8d4c8"/><rect x="96.6" y="128.3" width="1.6" height="2.2" fill="#c8d4c8"/><rect x="119.2" y="45.3" width="1.6" height="2.2" fill="#c8d4c8"/><rect x="122.6" y="45.3" width="1.6" height="2.2" fill="#c8d4c8"/><rect x="83.7" y="110.9" width=".9" height="1.4" fill="#c8d4c8"/><rect x="85.9" y="110.9" width=".9" height="1.4" fill="#c8d4c8"/><rect x="82.7" y="112.1" width="5.2" height="3.6" fill="#29332d"/><rect x="182.6" y="110.5" width=".9" height="1.4" fill="#c8d4c8"/><rect x="186.6" y="110.5" width=".9" height="1.4" fill="#c8d4c8"/><rect x="181.6" y="111.7" width="7.0" height="3.2" fill="#29332d"/><rect x="171.4" y="57.3" width=".9" height="1.4" fill="#c8d4c8"/><rect x="175.4" y="57.3" width=".9" height="1.4" fill="#c8d4c8"/><rect x="170.4" y="58.5" width="7.1" height="3.8" fill="#29332d"/><rect x="120.0" y="60.3" width=".9" height="1.4" fill="#c8d4c8"/><rect x="124.5" y="60.3" width=".9" height="1.4" fill="#c8d4c8"/><rect x="119.0" y="61.5" width="7.5" height="4.5" fill="#29332d"/><rect x="62.2" y="37.6" width=".9" height="1.4" fill="#c8d4c8"/><rect x="65.6" y="37.6" width=".9" height="1.4" fill="#c8d4c8"/><rect x="61.2" y="38.8" width="6.5" height="4.9" fill="#29332d"/><rect x="108.2" y="51.0" width=".9" height="1.4" fill="#c8d4c8"/><rect x="112.4" y="51.0" width=".9" height="1.4" fill="#c8d4c8"/><rect x="107.2" y="52.2" width="7.3" height="3.1" fill="#29332d"/><rect x="116.7" y="109.1" width=".9" height="1.4" fill="#c8d4c8"/><rect x="119.2" y="109.1" width=".9" height="1.4" fill="#c8d4c8"/><rect x="115.7" y="110.3" width="5.5" height="4.2" fill="#29332d"/><rect x="2.5" y="103.9" width=".9" height="1.4" fill="#c8d4c8"/><rect x="5.3" y="103.9" width=".9" height="1.4" fill="#c8d4c8"/><rect x="1.5" y="105.1" width="5.8" height="3.5" fill="#29332d"/><rect x="161.0" y="81.7" width=".9" height="1.4" fill="#c8d4c8"/><rect x="166.6" y="81.7" width=".9" height="1.4" fill="#c8d4c8"/><rect x="160.0" y="82.9" width="8.7" height="3.1" fill="#29332d"/><rect x="2.5" y="73.7" width=".9" height="1.4" fill="#c8d4c8"/><rect x="5.3" y="73.7" width=".9" height="1.4" fill="#c8d4c8"/><rect x="1.5" y="74.9" width="5.8" height="3.8" fill="#29332d"/><rect x="81.0" y="114.3" width=".9" height="1.4" fill="#c8d4c8"/><rect x="86.2" y="114.3" width=".9" height="1.4" fill="#c8d4c8"/><rect x="80.0" y="115.5" width="8.3" height="3.2" fill="#29332d"/><rect x="77.8" y="37.5" width=".9" height="1.4" fill="#c8d4c8"/><rect x="81.8" y="37.5" width=".9" height="1.4" fill="#c8d4c8"/><rect x="76.8" y="38.7" width="7.0" height="4.9" fill="#29332d"/><rect x="139.8" y="107.9" width=".9" height="1.4" fill="#c8d4c8"/><rect x="142.5" y="107.9" width=".9" height="1.4" fill="#c8d4c8"/><rect x="138.8" y="109.1" width="5.7" height="3.6" fill="#29332d"/><rect x="191.7" y="122.8" width=".9" height="1.4" fill="#c8d4c8"/><rect x="197.9" y="122.8" width=".9" height="1.4" fill="#c8d4c8"/><rect x="190.7" y="124.0" width="9.2" height="4.0" fill="#29332d"/><rect x="197.7" y="126.1" width=".9" height="1.4" fill="#c8d4c8"/><rect x="203.9" y="126.1" width=".9" height="1.4" fill="#c8d4c8"/><rect x="196.7" y="127.3" width="9.2" height="4.7" fill="#29332d"/><rect x="107.9" y="76.8" width=".9" height="1.4" fill="#c8d4c8"/><rect x="114.3" y="76.8" width=".9" height="1.4" fill="#c8d4c8"/><rect x="106.9" y="78.0" width="9.4" height="4.2" fill="#29332d"/><rect x="27.4" y="1.8" width=".9" height="1.4" fill="#c8d4c8"/><rect x="32.3" y="1.8" width=".9" height="1.4" fill="#c8d4c8"/><rect x="26.4" y="3.0" width="7.9" height="4.8" fill="#29332d"/><rect x="54.7" y="122.7" width=".9" height="1.4" fill="#c8d4c8"/><rect x="60.5" y="122.7" width=".9" height="1.4" fill="#c8d4c8"/><rect x="53.7" y="123.9" width="8.8" height="3.2" fill="#29332d"/><rect x="127.1" y="112.3" width=".9" height="1.4" fill="#c8d4c8"/><rect x="131.3" y="112.3" width=".9" height="1.4" fill="#c8d4c8"/><rect x="126.1" y="113.5" width="7.2" height="3.7" fill="#29332d"/><rect x="178.9" y="52.3" width=".9" height="1.4" fill="#c8d4c8"/><rect x="184.4" y="52.3" width=".9" height="1.4" fill="#c8d4c8"/><rect x="177.9" y="53.5" width="8.5" height="4.6" fill="#29332d"/><rect x="192.2" y="56.5" width=".9" height="1.4" fill="#c8d4c8"/><rect x="196.5" y="56.5" width=".9" height="1.4" fill="#c8d4c8"/><rect x="191.2" y="57.7" width="7.3" height="4.9" fill="#29332d"/><rect x="118.1" y="96.1" width=".9" height="1.4" fill="#c8d4c8"/><rect x="120.5" y="96.1" width=".9" height="1.4" fill="#c8d4c8"/><rect x="117.1" y="97.3" width="5.4" height="3.9" fill="#29332d"/><rect x="50.5" y="24.0" width=".9" height="1.4" fill="#c8d4c8"/><rect x="55.4" y="24.0" width=".9" height="1.4" fill="#c8d4c8"/><rect x="49.5" y="25.2" width="7.9" height="3.8" fill="#29332d"/><rect x="93.0" y="110.5" width=".9" height="1.4" fill="#c8d4c8"/><rect x="95.7" y="110.5" width=".9" height="1.4" fill="#c8d4c8"/><rect x="92.0" y="111.7" width="5.6" height="4.1" fill="#29332d"/><rect x="100.8" y="25.6" width=".9" height="1.4" fill="#c8d4c8"/><rect x="104.7" y="25.6" width=".9" height="1.4" fill="#c8d4c8"/><rect x="99.8" y="26.8" width="6.9" height="4.0" fill="#29332d"/><rect x="105.4" y="18.9" width=".9" height="1.4" fill="#c8d4c8"/><rect x="109.0" y="18.9" width=".9" height="1.4" fill="#c8d4c8"/><rect x="104.4" y="20.1" width="6.6" height="3.0" fill="#29332d"/><rect x="147.4" y="117.4" width=".9" height="1.4" fill="#c8d4c8"/><rect x="152.1" y="117.4" width=".9" height="1.4" fill="#c8d4c8"/><rect x="146.4" y="118.6" width="7.7" height="4.4" fill="#29332d"/><rect x="40.4" y="125.0" width=".9" height="1.4" fill="#c8d4c8"/><rect x="44.8" y="125.0" width=".9" height="1.4" fill="#c8d4c8"/><rect x="39.4" y="126.2" width="7.4" height="4.4" fill="#29332d"/><rect x="131.6" y="40.9" width=".9" height="1.4" fill="#c8d4c8"/><rect x="136.9" y="40.9" width=".9" height="1.4" fill="#c8d4c8"/><rect x="130.6" y="42.1" width="8.3" height="3.3" fill="#29332d"/><rect x="186.6" y="135.5" width=".9" height="1.4" fill="#c8d4c8"/><rect x="193.3" y="135.5" width=".9" height="1.4" fill="#c8d4c8"/><rect x="185.6" y="136.7" width="9.8" height="4.9" fill="#29332d"/><rect x="132.0" y="14.4" width=".9" height="1.4" fill="#c8d4c8"/><rect x="134.6" y="14.4" width=".9" height="1.4" fill="#c8d4c8"/><rect x="131.0" y="15.6" width="5.6" height="3.2" fill="#29332d"/><rect x="175.0" y="75.3" width=".9" height="1.4" fill="#c8d4c8"/><rect x="179.2" y="75.3" width=".9" height="1.4" fill="#c8d4c8"/><rect x="174.0" y="76.5" width="7.2" height="3.6" fill="#29332d"/><rect x="181.4" y="79.8" width=".9" height="1.4" fill="#c8d4c8"/><rect x="184.0" y="79.8" width=".9" height="1.4" fill="#c8d4c8"/><rect x="180.4" y="81.0" width="5.6" height="3.7" fill="#29332d"/><rect x="181.8" y="104.6" width=".9" height="1.4" fill="#c8d4c8"/><rect x="188.6" y="104.6" width=".9" height="1.4" fill="#c8d4c8"/><rect x="180.8" y="105.8" width="9.8" height="4.2" fill="#29332d"/><rect x="140.8" y="103.9" width="3.8" height="3.0" fill="#c9a48a"/><rect x="34.9" y="104.2" width="3.1" height="2.7" fill="#c9a48a"/><rect x="82.4" y="91.8" width="5.0" height="2.9" fill="#c9a48a"/><rect x="187.9" y="104.2" width="4.2" height="2.5" fill="#c9a48a"/><rect x="151.0" y="6.6" width="2.7" height="4.7" fill="#c9a48a"/><rect x="40.1" y="44.4" width="3.2" height="3.0" fill="#c9a48a"/><rect x="153.0" y="53.0" width="2.4" height="4.9" fill="#c9a48a"/><rect x="30.1" y="61.9" width="2.7" height="3.3" fill="#c9a48a"/><rect x="198.4" y="128.7" width="2.1" height="4.9" fill="#c9a48a"/><rect x="164.9" y="82.7" width="5.4" height="2.7" fill="#c9a48a"/><rect x="141.9" y="24.3" width="3.5" height="2.1" fill="#c9a48a"/><rect x="128.5" y="48.8" width="2.8" height="4.1" fill="#c9a48a"/><rect x="10.6" y="65.4" width="3.2" height="2.9" fill="#c9a48a"/><rect x="165.4" y="64.6" width="2.6" height="4.2" fill="#c9a48a"/><rect x="34.2" y="117.2" width="3.2" height="2.6" fill="#c9a48a"/><rect x="65.1" y="68.8" width="3.6" height="2.0" fill="#c9a48a"/><rect x="120.6" y="29.4" width="2.6" height="4.4" fill="#c9a48a"/><rect x="111.4" y="128.4" width="4.7" height="2.3" fill="#c9a48a"/><rect x="13.0" y="122.6" width="2.7" height="4.5" fill="#c9a48a"/><rect x="18.4" y="71.4" width="3.1" height="2.6" fill="#c9a48a"/><rect x="137.4" y="80.7" width="4.0" height="2.5" fill="#c9a48a"/><rect x="83.7" y="96.3" width="5.6" height="2.6" fill="#c9a48a"/><rect x="140.2" y="50.1" width="5.7" height="3.0" fill="#c9a48a"/><rect x="156.0" y="112.4" width="2.1" height="3.6" fill="#c9a48a"/><rect x="75.9" y="48.5" width="3.3" height="2.8" fill="#c9a48a"/><rect x="107.5" y="86.4" width="2.1" height="3.9" fill="#c9a48a"/><rect x="36" y="76" width="20" height="24" fill="#2d3230"/><rect x="32" y="78.0" width="4" height="1.2" fill="#c8d8c8"/><rect x="56" y="78.0" width="4" height="1.2" fill="#c8d8c8"/><rect x="32" y="81.2" width="4" height="1.2" fill="#c8d8c8"/><rect x="56" y="81.2" width="4" height="1.2" fill="#c8d8c8"/><rect x="32" y="84.4" width="4" height="1.2" fill="#c8d8c8"/><rect x="56" y="84.4" width="4" height="1.2" fill="#c8d8c8"/><rect x="32" y="87.6" width="4" height="1.2" fill="#c8d8c8"/><rect x="56" y="87.6" width="4" height="1.2" fill="#c8d8c8"/><rect x="32" y="90.8" width="4" height="1.2" fill="#c8d8c8"/><rect x="56" y="90.8" width="4" height="1.2" fill="#c8d8c8"/><rect x="32" y="94.0" width="4" height="1.2" fill="#c8d8c8"/><rect x="56" y="94.0" width="4" height="1.2" fill="#c8d8c8"/><rect x="32" y="97.2" width="4" height="1.2" fill="#c8d8c8"/><rect x="56" y="97.2" width="4" height="1.2" fill="#c8d8c8"/><rect x="69" y="60" width="16" height="7" fill="#cfae92"/><rect x="90" y="60" width="16" height="7" fill="#cfae92"/><rect x="46" y="12" width="14" height="13" fill="#6a6660"/><rect x="8" y="34" width="5" height="14" fill="#a85a48"/><rect x="8.5" y="37" width="4" height="8" fill="#c87060"/><rect x="12" y="1" width="13" height="9" fill="#6a6660"/><path d="M150 2 l55 0 l0 16 l-40 0 Z" fill="#5ab87a" opacity=".45"/><rect x="125" y="37" width="80" height="14" fill="#68c080" opacity=".35"/><rect x="68" y="136" width="130" height="8" fill="#1f6e35"/><rect x="69.0" y="137" width="1.4" height="6" fill="#c8e0c8"/><rect x="72.0" y="137" width="1.4" height="6" fill="#c8e0c8"/><rect x="75.1" y="137" width="1.4" height="6" fill="#c8e0c8"/><rect x="78.2" y="137" width="1.4" height="6" fill="#c8e0c8"/><rect x="81.2" y="137" width="1.4" height="6" fill="#c8e0c8"/><rect x="84.2" y="137" width="1.4" height="6" fill="#c8e0c8"/><rect x="87.3" y="137" width="1.4" height="6" fill="#c8e0c8"/><rect x="90.3" y="137" width="1.4" height="6" fill="#c8e0c8"/><rect x="93.4" y="137" width="1.4" height="6" fill="#c8e0c8"/><rect x="96.5" y="137" width="1.4" height="6" fill="#c8e0c8"/><rect x="99.5" y="137" width="1.4" height="6" fill="#c8e0c8"/><rect x="102.5" y="137" width="1.4" height="6" fill="#c8e0c8"/><rect x="105.6" y="137" width="1.4" height="6" fill="#c8e0c8"/><rect x="108.7" y="137" width="1.4" height="6" fill="#c8e0c8"/><rect x="111.7" y="137" width="1.4" height="6" fill="#c8e0c8"/><rect x="114.8" y="137" width="1.4" height="6" fill="#c8e0c8"/><rect x="117.8" y="137" width="1.4" height="6" fill="#c8e0c8"/><rect x="120.8" y="137" width="1.4" height="6" fill="#c8e0c8"/><rect x="123.9" y="137" width="1.4" height="6" fill="#c8e0c8"/><rect x="126.9" y="137" width="1.4" height="6" fill="#c8e0c8"/><rect x="130.0" y="137" width="1.4" height="6" fill="#c8e0c8"/><rect x="133.1" y="137" width="1.4" height="6" fill="#c8e0c8"/><rect x="136.1" y="137" width="1.4" height="6" fill="#c8e0c8"/><rect x="139.1" y="137" width="1.4" height="6" fill="#c8e0c8"/><rect x="142.2" y="137" width="1.4" height="6" fill="#c8e0c8"/><rect x="145.2" y="137" width="1.4" height="6" fill="#c8e0c8"/><rect x="148.3" y="137" width="1.4" height="6" fill="#c8e0c8"/><rect x="151.3" y="137" width="1.4" height="6" fill="#c8e0c8"/><rect x="154.4" y="137" width="1.4" height="6" fill="#c8e0c8"/><rect x="157.4" y="137" width="1.4" height="6" fill="#c8e0c8"/><rect x="160.5" y="137" width="1.4" height="6" fill="#c8e0c8"/><rect x="163.6" y="137" width="1.4" height="6" fill="#c8e0c8"/><rect x="166.6" y="137" width="1.4" height="6" fill="#c8e0c8"/><rect x="169.6" y="137" width="1.4" height="6" fill="#c8e0c8"/><rect x="172.7" y="137" width="1.4" height="6" fill="#c8e0c8"/><rect x="175.8" y="137" width="1.4" height="6" fill="#c8e0c8"/><rect x="178.8" y="137" width="1.4" height="6" fill="#c8e0c8"/><rect x="181.8" y="137" width="1.4" height="6" fill="#c8e0c8"/><rect x="184.9" y="137" width="1.4" height="6" fill="#c8e0c8"/><rect x="187.9" y="137" width="1.4" height="6" fill="#c8e0c8"/><rect x="191.0" y="137" width="1.4" height="6" fill="#c8e0c8"/><rect x="194.1" y="137" width="1.4" height="6" fill="#c8e0c8"/></svg>
<div class="t" style="left:920.1px;top:288.90px;font-size:13px;color:#8d8d94;font-weight:400;letter-spacing:-0.2px;">CATEGORY</div>
<div class="t" style="left:1050.5px;top:288.05px;font-size:14px;color:#f2f2f2;font-weight:400;-webkit-text-stroke:.15px currentColor;">Printed Circuit Boa...</div>
<div class="t" style="left:920.1px;top:314.80px;font-size:13px;color:#8d8d94;font-weight:400;letter-spacing:-0.2px;">CPN</div>
<div class="t" style="left:1050.5px;top:313.95px;font-size:14px;color:#f2f2f2;font-weight:400;-webkit-text-stroke:.15px currentColor;">913-00063</div>
<div class="t" style="left:920.1px;top:340.90px;font-size:13px;color:#8d8d94;font-weight:400;letter-spacing:-0.2px;">EID</div>
<div class="t" style="left:920.1px;top:367.00px;font-size:13px;color:#8d8d94;font-weight:400;letter-spacing:-0.2px;">REVISION</div>
<div class="t" style="left:1050.5px;top:366.15px;font-size:14px;color:#f2f2f2;font-weight:400;-webkit-text-stroke:.15px currentColor;">2</div>
<div class="t" style="left:920.1px;top:393.10px;font-size:13px;color:#8d8d94;font-weight:400;letter-spacing:-0.2px;">STATUS</div>
<div class="r" style="left:1050px;top:389.5px;width:100px;height:20px;background:#f7ee7e;border-radius:10px;"></div>
<div class="t" style="left:1060.6px;top:393.10px;font-size:13px;color:#2a2a2a;font-weight:400;">PROTOTYPE</div>
<div class="r" style="left:952px;top:528px;width:298px;height:357px;border:1px solid #46454f;border-radius:12px;background:#363540;overflow:hidden;box-shadow:-12px 18px 44px rgba(30,45,90,.2);"><div class="r" style="left:0;top:0;width:298px;height:34px;background:#43424c"></div></div>
<svg style="left:0;top:0" width="1" height="1"><rect x="967" y="539.5" width="2" height="2" fill="#8a8a90"/><rect x="971.5" y="539.8" width="10" height="1.5" fill="#8a8a90"/><rect x="967" y="544.7" width="2" height="2" fill="#8a8a90"/><rect x="971.5" y="545.0" width="10" height="1.5" fill="#8a8a90"/><rect x="967" y="549.9" width="2" height="2" fill="#8a8a90"/><rect x="971.5" y="550.1999999999999" width="10" height="1.5" fill="#8a8a90"/></svg>
<div class="t" style="left:990.9px;top:538.67px;font-size:13.5px;color:#8c8c93;font-weight:700;">DETAILS</div>
<div class="t" style="left:972.1px;top:579.95px;font-size:14px;color:#f4f4f4;font-weight:400;-webkit-text-stroke:.15px currentColor;">Managed Kame PCB Project</div>
<div class="r" style="left:972px;top:602px;width:261px;height:1.5px;background:#5b5b63;"></div>
<svg style="left:0;top:0" width="1" height="1"><circle cx="981.7" cy="623.5" r="9" fill="none" stroke="#7d7d84" stroke-width="1.2"/><ellipse cx="981.7" cy="623.5" rx="4" ry="9" fill="none" stroke="#7d7d84" stroke-width="1.2"/><path d="M972.7 620 L990.7 620 M972.7 627 L990.7 627" stroke="#7d7d84" stroke-width="1.2"/></svg>
<div class="t" style="left:1000.1px;top:616.27px;font-size:13.5px;color:#8c8c93;font-weight:700;letter-spacing:-0.2px;">PRIMARY SOURCE</div>
<div class="t" style="left:972.1px;top:641.70px;font-size:13px;color:#8d8d94;font-weight:400;letter-spacing:-0.1px;">MPN</div>
<div class="t" style="right:127.79999999999995px;top:640.85px;font-size:14px;color:#f2f2f2;font-weight:400;-webkit-text-stroke:.15px currentColor;">913-00063</div>
<div class="t" style="left:972.1px;top:667.70px;font-size:13px;color:#8d8d94;font-weight:400;letter-spacing:-0.1px;">MFR</div>
<div class="t" style="right:127.79999999999995px;top:666.85px;font-size:14px;color:#f2f2f2;font-weight:400;-webkit-text-stroke:.15px currentColor;">Duro Demo</div>
<div class="t" style="left:972.1px;top:693.60px;font-size:13px;color:#8d8d94;font-weight:400;letter-spacing:-0.1px;">MIN QTY</div>
<div class="t" style="right:127.79999999999995px;top:692.75px;font-size:14px;color:#f2f2f2;font-weight:400;-webkit-text-stroke:.15px currentColor;">1</div>
<div class="t" style="left:972.1px;top:719.80px;font-size:13px;color:#8d8d94;font-weight:400;letter-spacing:-0.1px;">UNIT PRICE</div>
<div class="t" style="right:127.79999999999995px;top:718.95px;font-size:14px;color:#f2f2f2;font-weight:400;-webkit-text-stroke:.15px currentColor;">$3.3319</div>
<div class="t" style="left:972.1px;top:745.80px;font-size:13px;color:#8d8d94;font-weight:400;letter-spacing:-0.1px;">LEAD TIME</div>
<div class="t" style="right:127.79999999999995px;top:744.95px;font-size:14px;color:#f2f2f2;font-weight:400;-webkit-text-stroke:.15px currentColor;">120 DAYS</div>
<svg style="left:0;top:0" width="1" height="1"><circle cx="1166.2" cy="726.6" r="8" fill="#e8474c"/><rect x="1165.3" y="721.5" width="1.8" height="6.5" rx=".8" fill="#fff"/><circle cx="1166.2" cy="730.5" r="1" fill="#fff"/></svg>
<div class="r" style="left:972px;top:772px;width:261px;height:1.5px;background:#5b5b63;"></div>
<div class="t" style="left:972.1px;top:782.80px;font-size:13px;color:#8d8d94;font-weight:400;letter-spacing:-0.1px;">CREATED</div>
<div class="t" style="left:1068.2px;top:781.95px;font-size:14px;color:#f2f2f2;font-weight:400;-webkit-text-stroke:.15px currentColor;">Sep 29, 2022</div>
<div class="t" style="left:1158.6px;top:781.95px;font-size:14px;color:#8d8d94;font-weight:400;">04:25 PM</div>
<div class="t" style="left:972.1px;top:808.80px;font-size:13px;color:#8d8d94;font-weight:400;letter-spacing:-0.1px;">MODIFIED</div>
<div class="t" style="left:1068.2px;top:807.95px;font-size:14px;color:#f2f2f2;font-weight:400;-webkit-text-stroke:.15px currentColor;">Apr 26, 2023</div>
<div class="t" style="left:1158.6px;top:807.95px;font-size:14px;color:#8d8d94;font-weight:400;">03:24 PM</div>
<div class="t" style="left:972.1px;top:834.50px;font-size:13px;color:#8d8d94;font-weight:400;letter-spacing:-0.1px;">MODIFIED BY</div>
<div class="t" style="left:1068.2px;top:833.65px;font-size:14px;color:#f2f2f2;font-weight:400;-webkit-text-stroke:.15px currentColor;">Mark Norman</div>
<div class="r" style="left:680px;top:640px;width:260px;height:157px;background:radial-gradient(ellipse 120px 90px at 110px 90px,rgba(210,190,40,.07),transparent);"></div>
<div class="r" style="left:772px;top:724px;width:112px;height:112px;border-radius:30px;box-shadow:0 14px 30px rgba(90,90,30,.28);"></div>
<svg style="left:0;top:0" width="1360" height="960" viewBox="0 0 1360 960">
<g clip-path="url(#av2)">
<rect x="770" y="722" width="116" height="116" fill="url(#yg)"/>
<path d="M811 804 L849 798 L849 830 L811 830 Z" fill="#b06a55"/>
<path d="M811 812 C822 822 838 820 849 808 L849 816 C838 826 822 828 811 820 Z" fill="#9a5646" opacity=".7"/>
<path d="M788 840 C792 830 804 826 813 824 C822 830 838 830 847 823 C858 825 866 832 869 840 Z" fill="#e9b5b9"/>
<path d="M796 778 C789 760 795 742 813 735 C832 728 857 733 867 750 C873 763 869 781 859 791 C853 777 847 767 840 762 L808 762 C804 766 802 772 801 779 Z" fill="#e0ae92"/>
<circle cx="827.7" cy="743.0" r="2.0" fill="#cf9a80"/><circle cx="822.3" cy="738.6" r="2.6" fill="#edc3a5"/><circle cx="798.4" cy="768.6" r="1.2" fill="#e9bb9c"/><circle cx="813.9" cy="739.7" r="2.6" fill="#f5d5bd"/><circle cx="865.5" cy="746.6" r="1.7" fill="#f2cdb2"/><circle cx="817.6" cy="747.1" r="2.3" fill="#f2cdb2"/><circle cx="856.1" cy="751.3" r="2.0" fill="#e9bb9c"/><circle cx="858.9" cy="757.9" r="1.9" fill="#cf9a80"/><circle cx="808.3" cy="757.9" r="2.1" fill="#d9a386"/><circle cx="813.8" cy="747.9" r="1.3" fill="#e9bb9c"/><circle cx="813.5" cy="759.4" r="2.3" fill="#e9bb9c"/><circle cx="822.1" cy="742.4" r="2.1" fill="#d9a386"/><circle cx="826.6" cy="755.1" r="1.1" fill="#f5d5bd"/><circle cx="795.5" cy="756.0" r="1.3" fill="#edc3a5"/><circle cx="812.2" cy="757.3" r="2.8" fill="#f2cdb2"/><circle cx="828.6" cy="746.1" r="1.7" fill="#f2cdb2"/><circle cx="833.3" cy="738.4" r="2.7" fill="#d9a386"/><circle cx="802.0" cy="759.9" r="1.9" fill="#cf9a80"/><circle cx="863.2" cy="750.9" r="2.4" fill="#d9a386"/><circle cx="853.6" cy="751.1" r="2.3" fill="#d9a386"/><circle cx="860.3" cy="744.3" r="2.8" fill="#f5d5bd"/><circle cx="851.0" cy="737.9" r="2.4" fill="#cf9a80"/><circle cx="863.2" cy="744.7" r="2.8" fill="#f2cdb2"/><circle cx="800.2" cy="756.4" r="2.2" fill="#f2cdb2"/><circle cx="853.6" cy="738.5" r="2.3" fill="#edc3a5"/><circle cx="834.8" cy="754.7" r="1.6" fill="#f5d5bd"/><circle cx="810.8" cy="754.3" r="1.2" fill="#cf9a80"/><circle cx="834.5" cy="749.4" r="2.0" fill="#d9a386"/><circle cx="858.8" cy="754.9" r="2.5" fill="#f5d5bd"/><circle cx="833.9" cy="758.3" r="1.3" fill="#edc3a5"/><circle cx="798.5" cy="769.4" r="2.6" fill="#edc3a5"/><circle cx="829.9" cy="759.1" r="2.3" fill="#edc3a5"/><circle cx="839.0" cy="743.9" r="2.8" fill="#edc3a5"/><circle cx="820.9" cy="759.1" r="2.0" fill="#f2cdb2"/><circle cx="807.9" cy="744.5" r="1.3" fill="#d9a386"/><circle cx="815.9" cy="746.5" r="2.0" fill="#edc3a5"/><circle cx="847.2" cy="739.2" r="1.8" fill="#edc3a5"/><circle cx="843.7" cy="758.6" r="1.6" fill="#f2cdb2"/><circle cx="830.3" cy="748.8" r="1.3" fill="#cf9a80"/><circle cx="851.2" cy="744.4" r="1.2" fill="#e9bb9c"/><circle cx="805.5" cy="770.6" r="2.7" fill="#f5d5bd"/><circle cx="848.8" cy="756.2" r="1.3" fill="#f2cdb2"/><circle cx="822.8" cy="737.1" r="2.1" fill="#e9bb9c"/><circle cx="852.4" cy="745.3" r="2.0" fill="#e9bb9c"/><circle cx="798.0" cy="755.8" r="1.6" fill="#cf9a80"/><circle cx="829.6" cy="750.4" r="2.2" fill="#e9bb9c"/><circle cx="798.3" cy="746.3" r="2.0" fill="#f5d5bd"/><circle cx="832.0" cy="735.2" r="1.4" fill="#d9a386"/><circle cx="826.3" cy="752.8" r="1.2" fill="#e9bb9c"/><circle cx="797.1" cy="767.0" r="1.4" fill="#edc3a5"/><circle cx="828.8" cy="748.3" r="2.4" fill="#e9bb9c"/><circle cx="834.2" cy="752.5" r="2.5" fill="#edc3a5"/><circle cx="846.6" cy="741.4" r="1.2" fill="#f5d5bd"/><circle cx="829.7" cy="740.6" r="2.3" fill="#edc3a5"/><circle cx="817.5" cy="742.2" r="1.6" fill="#cf9a80"/><circle cx="817.9" cy="746.4" r="2.1" fill="#d9a386"/><circle cx="824.1" cy="758.1" r="1.2" fill="#f2cdb2"/><circle cx="855.9" cy="748.4" r="1.8" fill="#f2cdb2"/><circle cx="850.9" cy="737.3" r="1.4" fill="#e9bb9c"/><circle cx="802.4" cy="750.9" r="1.1" fill="#f5d5bd"/><circle cx="850.7" cy="744.7" r="1.8" fill="#edc3a5"/><circle cx="855.4" cy="754.3" r="1.1" fill="#cf9a80"/><circle cx="849.8" cy="742.4" r="2.4" fill="#e9bb9c"/><circle cx="808.7" cy="754.1" r="1.6" fill="#e9bb9c"/><circle cx="803.3" cy="774.0" r="2.2" fill="#f2cdb2"/><circle cx="834.0" cy="759.6" r="2.0" fill="#edc3a5"/><circle cx="832.5" cy="735.2" r="1.0" fill="#d9a386"/><circle cx="798.3" cy="759.3" r="2.4" fill="#d9a386"/><circle cx="858.9" cy="747.6" r="1.2" fill="#e9bb9c"/><circle cx="845.3" cy="745.0" r="1.9" fill="#f2cdb2"/><circle cx="811.5" cy="751.8" r="1.2" fill="#edc3a5"/><circle cx="854.5" cy="752.2" r="2.4" fill="#e9bb9c"/><circle cx="820.0" cy="735.0" r="1.1" fill="#f2cdb2"/><circle cx="798.2" cy="760.3" r="1.6" fill="#e9bb9c"/><circle cx="806.6" cy="755.6" r="1.7" fill="#d9a386"/><circle cx="817.9" cy="737.3" r="2.1" fill="#f2cdb2"/><circle cx="833.2" cy="737.8" r="2.3" fill="#edc3a5"/><circle cx="854.1" cy="756.0" r="1.8" fill="#d9a386"/><circle cx="827.0" cy="756.0" r="1.8" fill="#f5d5bd"/><circle cx="837.4" cy="759.3" r="2.6" fill="#edc3a5"/><circle cx="827.3" cy="739.9" r="2.5" fill="#d9a386"/><circle cx="836.1" cy="750.6" r="2.4" fill="#f2cdb2"/><circle cx="830.0" cy="750.1" r="1.3" fill="#f2cdb2"/><circle cx="857.2" cy="752.0" r="1.0" fill="#cf9a80"/><circle cx="831.7" cy="760.6" r="2.0" fill="#f5d5bd"/><circle cx="849.6" cy="747.2" r="2.7" fill="#d9a386"/><circle cx="836.0" cy="759.3" r="1.2" fill="#e9bb9c"/><circle cx="834.4" cy="753.1" r="1.0" fill="#edc3a5"/><circle cx="833.0" cy="740.3" r="2.2" fill="#d9a386"/><circle cx="849.7" cy="751.8" r="2.6" fill="#f2cdb2"/><circle cx="822.8" cy="738.8" r="2.2" fill="#cf9a80"/><circle cx="823.1" cy="755.4" r="2.0" fill="#f2cdb2"/><circle cx="812.9" cy="745.4" r="2.1" fill="#d9a386"/><circle cx="796.3" cy="764.8" r="2.1" fill="#f2cdb2"/><circle cx="824.6" cy="748.5" r="1.2" fill="#f5d5bd"/><circle cx="802.9" cy="758.3" r="1.7" fill="#f2cdb2"/><circle cx="795.9" cy="749.2" r="1.7" fill="#e9bb9c"/><circle cx="837.2" cy="756.4" r="1.6" fill="#f2cdb2"/><circle cx="804.4" cy="751.8" r="1.8" fill="#f5d5bd"/><circle cx="819.9" cy="749.6" r="2.3" fill="#edc3a5"/><circle cx="828.6" cy="750.4" r="2.3" fill="#d9a386"/><circle cx="820.0" cy="746.1" r="1.9" fill="#f5d5bd"/><circle cx="795.8" cy="754.2" r="2.7" fill="#e9bb9c"/><circle cx="823.4" cy="742.4" r="2.2" fill="#e9bb9c"/><circle cx="835.2" cy="755.8" r="1.3" fill="#edc3a5"/><circle cx="862.1" cy="742.9" r="1.8" fill="#f2cdb2"/><circle cx="854.2" cy="750.9" r="1.0" fill="#d9a386"/><circle cx="805.2" cy="755.1" r="2.3" fill="#edc3a5"/><circle cx="867.5" cy="752.1" r="2.8" fill="#f2cdb2"/><circle cx="855.5" cy="755.1" r="2.7" fill="#d9a386"/><circle cx="805.3" cy="755.1" r="1.5" fill="#edc3a5"/><circle cx="822.5" cy="736.3" r="2.2" fill="#f5d5bd"/><circle cx="839.3" cy="735.4" r="1.4" fill="#d9a386"/><circle cx="802.4" cy="755.6" r="1.5" fill="#f5d5bd"/><circle cx="799.5" cy="761.8" r="2.8" fill="#f5d5bd"/><circle cx="835.6" cy="745.6" r="1.2" fill="#edc3a5"/><circle cx="819.4" cy="751.4" r="1.9" fill="#cf9a80"/><circle cx="820.3" cy="742.4" r="2.2" fill="#e9bb9c"/><circle cx="823.3" cy="760.8" r="2.1" fill="#d9a386"/><circle cx="812.5" cy="757.1" r="2.2" fill="#d9a386"/><circle cx="836.6" cy="745.0" r="2.0" fill="#cf9a80"/><circle cx="812.9" cy="737.5" r="2.7" fill="#e9bb9c"/><circle cx="804.9" cy="768.7" r="1.2" fill="#cf9a80"/><circle cx="817.2" cy="760.1" r="2.0" fill="#f2cdb2"/><circle cx="864.8" cy="751.8" r="1.6" fill="#d9a386"/><circle cx="829.1" cy="735.9" r="1.2" fill="#d9a386"/><circle cx="807.9" cy="744.2" r="2.6" fill="#edc3a5"/><circle cx="866.3" cy="750.5" r="1.2" fill="#edc3a5"/><circle cx="796.5" cy="775.8" r="2.1" fill="#cf9a80"/><circle cx="810.3" cy="754.0" r="1.5" fill="#edc3a5"/><circle cx="853.5" cy="761.6" r="2.6" fill="#edc3a5"/><circle cx="840.4" cy="757.6" r="1.3" fill="#e9bb9c"/><circle cx="843.0" cy="756.2" r="1.9" fill="#edc3a5"/><circle cx="809.8" cy="760.1" r="2.0" fill="#f2cdb2"/><circle cx="860.4" cy="746.3" r="1.2" fill="#d9a386"/><circle cx="831.9" cy="759.6" r="2.3" fill="#e9bb9c"/><circle cx="854.5" cy="749.2" r="1.2" fill="#f5d5bd"/><circle cx="834.3" cy="737.9" r="1.6" fill="#d9a386"/><circle cx="864.5" cy="747.5" r="1.5" fill="#d9a386"/><circle cx="823.0" cy="741.6" r="1.0" fill="#cf9a80"/><circle cx="846.7" cy="748.3" r="1.7" fill="#e9bb9c"/><circle cx="824.9" cy="744.8" r="2.0" fill="#edc3a5"/><circle cx="844.4" cy="738.5" r="1.3" fill="#f5d5bd"/><circle cx="833.1" cy="735.6" r="1.1" fill="#f5d5bd"/><circle cx="827.5" cy="756.6" r="2.7" fill="#cf9a80"/><circle cx="842.6" cy="743.7" r="1.3" fill="#f5d5bd"/><circle cx="808.8" cy="758.5" r="2.4" fill="#cf9a80"/><circle cx="794.8" cy="767.1" r="1.8" fill="#f5d5bd"/><circle cx="854.4" cy="756.7" r="1.4" fill="#f2cdb2"/><circle cx="837.7" cy="743.4" r="1.6" fill="#e9bb9c"/><circle cx="837.4" cy="759.2" r="2.5" fill="#cf9a80"/><circle cx="797.8" cy="755.0" r="1.7" fill="#f2cdb2"/><circle cx="811.8" cy="739.4" r="2.7" fill="#e9bb9c"/><circle cx="844.9" cy="755.0" r="2.5" fill="#f5d5bd"/><circle cx="832.7" cy="748.6" r="2.2" fill="#e9bb9c"/><circle cx="800.2" cy="760.1" r="1.0" fill="#edc3a5"/><circle cx="828.6" cy="734.2" r="1.4" fill="#f2cdb2"/><circle cx="861.9" cy="742.4" r="2.5" fill="#f5d5bd"/><circle cx="795.1" cy="754.8" r="2.6" fill="#f5d5bd"/><circle cx="852.2" cy="760.8" r="1.8" fill="#d9a386"/><circle cx="823.9" cy="758.0" r="1.3" fill="#f2cdb2"/><circle cx="795.5" cy="757.6" r="1.8" fill="#edc3a5"/><circle cx="824.2" cy="746.7" r="2.3" fill="#edc3a5"/><circle cx="796.2" cy="752.5" r="1.3" fill="#f2cdb2"/><circle cx="821.8" cy="757.1" r="1.7" fill="#e9bb9c"/><circle cx="803.9" cy="773.4" r="2.5" fill="#d9a386"/><circle cx="849.5" cy="756.6" r="1.3" fill="#d9a386"/><circle cx="800.3" cy="769.7" r="2.3" fill="#edc3a5"/><circle cx="818.3" cy="735.9" r="1.5" fill="#e9bb9c"/><circle cx="848.4" cy="758.2" r="2.5" fill="#d9a386"/>
<path d="M803 784 C802 769 809 757 826 756 C843 755 852 765 851 781 C851 797 846 808 838 815 C832 820 822 821 816 815 C808 807 803 797 803 784 Z" fill="#d08a6b"/>
<ellipse cx="825" cy="766" rx="13" ry="6" fill="#dc9d7d" opacity=".7"/>
<ellipse cx="853.5" cy="792" rx="4" ry="8" fill="#c27a5f"/>
<circle cx="854.0" cy="786.1" r="2.2" fill="#e9bb9c"/><circle cx="860.9" cy="768.7" r="2.5" fill="#f2cdb2"/><circle cx="857.2" cy="763.4" r="1.6" fill="#f2cdb2"/><circle cx="861.6" cy="784.7" r="2.3" fill="#f5d5bd"/><circle cx="860.8" cy="766.3" r="1.8" fill="#f5d5bd"/><circle cx="863.6" cy="769.4" r="2.2" fill="#e9bb9c"/><circle cx="857.3" cy="770.9" r="2.2" fill="#f5d5bd"/><circle cx="849.1" cy="774.6" r="1.4" fill="#cf9a80"/><circle cx="855.9" cy="771.6" r="1.5" fill="#f2cdb2"/><circle cx="858.2" cy="759.2" r="1.9" fill="#f5d5bd"/><circle cx="855.2" cy="771.0" r="2.0" fill="#e9bb9c"/><circle cx="857.5" cy="783.2" r="1.1" fill="#edc3a5"/><circle cx="856.2" cy="756.1" r="2.8" fill="#cf9a80"/><circle cx="854.2" cy="763.5" r="2.6" fill="#d9a386"/><circle cx="860.3" cy="762.3" r="1.7" fill="#e9bb9c"/><circle cx="866.9" cy="773.0" r="1.1" fill="#d9a386"/><circle cx="865.0" cy="772.4" r="1.2" fill="#f2cdb2"/><circle cx="857.1" cy="767.3" r="1.2" fill="#f2cdb2"/><circle cx="854.5" cy="784.5" r="2.6" fill="#cf9a80"/><circle cx="853.7" cy="765.7" r="1.2" fill="#cf9a80"/><circle cx="856.1" cy="769.4" r="1.4" fill="#cf9a80"/><circle cx="851.8" cy="773.6" r="1.0" fill="#f5d5bd"/><circle cx="857.8" cy="762.8" r="2.7" fill="#d9a386"/><circle cx="861.0" cy="772.7" r="2.4" fill="#edc3a5"/><circle cx="863.0" cy="783.6" r="1.0" fill="#f2cdb2"/><circle cx="850.6" cy="776.4" r="1.5" fill="#edc3a5"/><circle cx="860.3" cy="760.8" r="1.5" fill="#f2cdb2"/><circle cx="866.0" cy="767.2" r="1.7" fill="#cf9a80"/><circle cx="866.8" cy="774.5" r="1.3" fill="#edc3a5"/><circle cx="855.6" cy="775.4" r="1.8" fill="#f5d5bd"/><circle cx="862.4" cy="773.0" r="1.9" fill="#edc3a5"/><circle cx="858.2" cy="775.1" r="1.9" fill="#edc3a5"/><circle cx="855.7" cy="761.0" r="2.3" fill="#f2cdb2"/><circle cx="852.5" cy="782.2" r="1.5" fill="#edc3a5"/><circle cx="850.8" cy="774.6" r="1.4" fill="#f5d5bd"/><circle cx="855.6" cy="776.1" r="2.3" fill="#f2cdb2"/><circle cx="855.4" cy="758.0" r="1.3" fill="#edc3a5"/><circle cx="852.4" cy="764.6" r="2.1" fill="#e9bb9c"/><circle cx="865.0" cy="778.3" r="1.0" fill="#e9bb9c"/><circle cx="858.2" cy="761.0" r="1.3" fill="#f5d5bd"/><circle cx="866.5" cy="766.5" r="1.9" fill="#f5d5bd"/><circle cx="858.2" cy="784.2" r="2.5" fill="#d9a386"/><circle cx="859.2" cy="785.4" r="1.6" fill="#e9bb9c"/><circle cx="852.5" cy="783.8" r="2.5" fill="#f2cdb2"/><circle cx="850.8" cy="779.3" r="1.1" fill="#e9bb9c"/><circle cx="859.0" cy="783.6" r="1.0" fill="#d9a386"/><circle cx="855.3" cy="757.9" r="2.3" fill="#e9bb9c"/><circle cx="864.9" cy="761.1" r="1.7" fill="#f2cdb2"/><circle cx="855.8" cy="776.8" r="1.8" fill="#f2cdb2"/><circle cx="850.7" cy="764.3" r="2.1" fill="#cf9a80"/><circle cx="851.9" cy="760.2" r="1.4" fill="#edc3a5"/><circle cx="862.7" cy="776.4" r="1.3" fill="#e9bb9c"/><circle cx="856.9" cy="784.5" r="2.0" fill="#edc3a5"/><circle cx="856.9" cy="787.3" r="1.8" fill="#e9bb9c"/><circle cx="858.2" cy="786.7" r="2.4" fill="#edc3a5"/>
<path d="M805 776.5 C809 774.5 815 774.5 818.5 776 M829 775.5 C833 774.5 838 775 841 777" fill="none" stroke="#3a2218" stroke-width="1.6" stroke-linecap="round"/>
<ellipse cx="810.5" cy="783" rx="3.2" ry="1.4" fill="#3a2a28"/><ellipse cx="831" cy="783.3" rx="3.2" ry="1.4" fill="#3a2a28"/>
<path d="M819 787 C817 792 815 795 816 796 C819 798 823 798 825 796" fill="none" stroke="#a8644c" stroke-width="1"/>
<path d="M810 803 C814 800.5 822 800.5 826 803 C823 808 813 808 810 803 Z" fill="#c57668"/>
</g>
<rect x="770.5" y="722.5" width="115" height="115" rx="30" fill="none" stroke="#c6b22c" stroke-opacity=".6" stroke-width="1"/>
<path d="M742.5 694.5 L780.2 708 L764 715.5 L756.5 731.5 Z" fill="#e6c800" stroke="#e6c800" stroke-width="1.4" stroke-linejoin="round" style="filter:drop-shadow(0 0 1px rgba(0,0,0,.6))"/>
</svg>
</body></html>
